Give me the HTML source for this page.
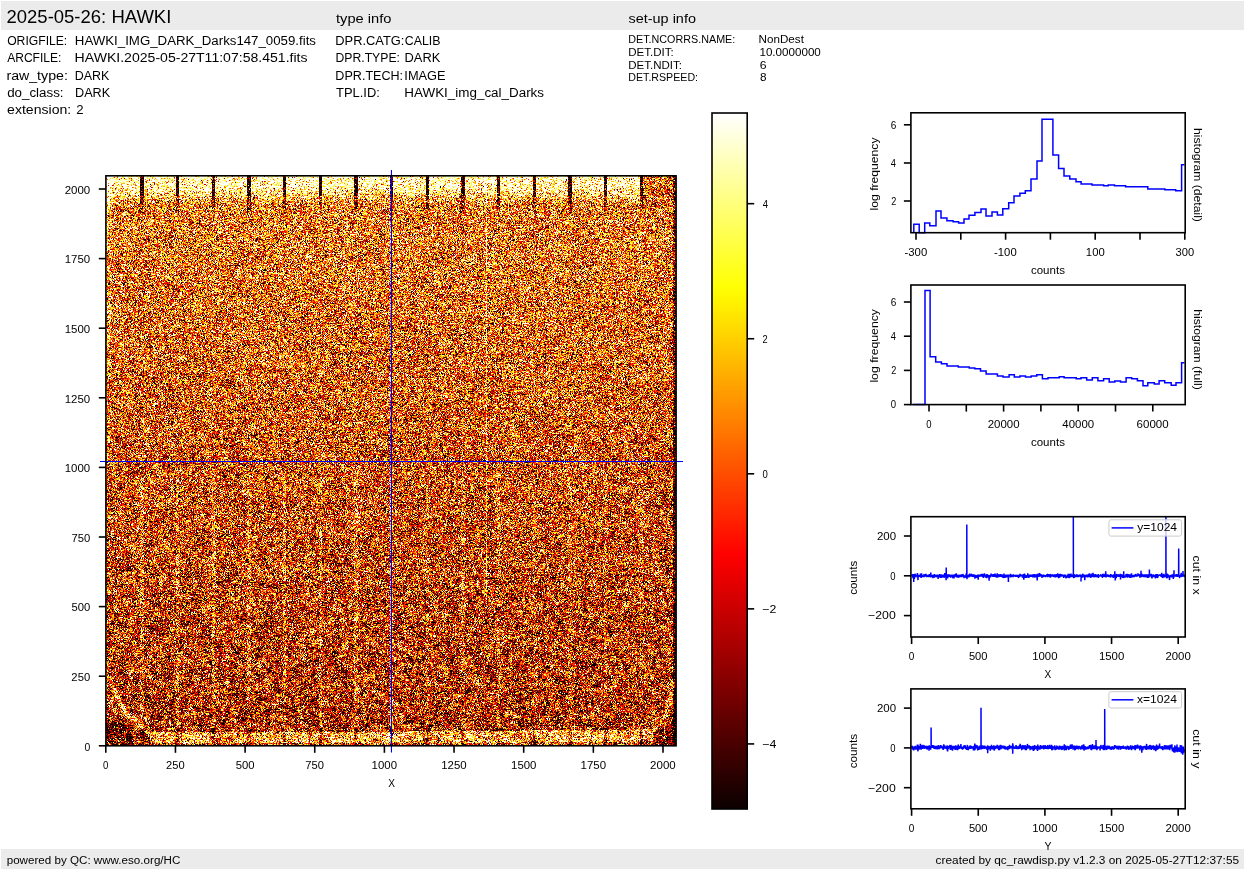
<!DOCTYPE html>
<html><head><meta charset="utf-8">
<style>
html,body{margin:0;padding:0;background:#fff;width:1245px;height:870px;overflow:hidden;}
#img{position:absolute;left:106px;top:176px;width:570px;height:570px;background:linear-gradient(to bottom,rgb(227,178,107) 0%,rgb(218,124,43) 5%,rgb(214,118,39) 16%,rgb(207,106,32) 32%,rgb(201,98,28) 42%,rgb(197,93,26) 53%,rgb(191,86,23) 63%,rgb(183,77,21) 74%,rgb(178,74,20) 84%,rgb(175,69,18) 89%,rgb(183,94,34) 95%);}
svg{position:absolute;left:0;top:0;}
text{font-family:"Liberation Sans",sans-serif;fill:#000;}
</style></head><body>
<canvas id="img" width="570" height="570"></canvas>
<svg width="1245" height="870" viewBox="0 0 1245 870">
<rect x="1" y="1" width="1243" height="29" fill="#ebebeb"/>
<rect x="1" y="849" width="1243" height="20" fill="#ebebeb"/>
<defs><linearGradient id="hot" x1="0" y1="0" x2="0" y2="1"><stop offset="0.0000" stop-color="#ffffff"/><stop offset="0.0167" stop-color="#ffffee"/><stop offset="0.0333" stop-color="#ffffde"/><stop offset="0.0500" stop-color="#ffffcd"/><stop offset="0.0667" stop-color="#ffffbc"/><stop offset="0.0833" stop-color="#ffffab"/><stop offset="0.1000" stop-color="#ffff9b"/><stop offset="0.1167" stop-color="#ffff8a"/><stop offset="0.1333" stop-color="#ffff79"/><stop offset="0.1500" stop-color="#ffff68"/><stop offset="0.1667" stop-color="#ffff58"/><stop offset="0.1833" stop-color="#ffff47"/><stop offset="0.2000" stop-color="#ffff36"/><stop offset="0.2167" stop-color="#ffff25"/><stop offset="0.2333" stop-color="#ffff15"/><stop offset="0.2500" stop-color="#ffff04"/><stop offset="0.2667" stop-color="#fff600"/><stop offset="0.2833" stop-color="#ffeb00"/><stop offset="0.3000" stop-color="#ffe000"/><stop offset="0.3167" stop-color="#ffd500"/><stop offset="0.3333" stop-color="#ffca00"/><stop offset="0.3500" stop-color="#ffbf00"/><stop offset="0.3667" stop-color="#ffb400"/><stop offset="0.3833" stop-color="#ffa800"/><stop offset="0.4000" stop-color="#ff9d00"/><stop offset="0.4167" stop-color="#ff9200"/><stop offset="0.4333" stop-color="#ff8700"/><stop offset="0.4500" stop-color="#ff7c00"/><stop offset="0.4667" stop-color="#ff7100"/><stop offset="0.4833" stop-color="#ff6500"/><stop offset="0.5000" stop-color="#ff5a00"/><stop offset="0.5167" stop-color="#ff4f00"/><stop offset="0.5333" stop-color="#ff4400"/><stop offset="0.5500" stop-color="#ff3900"/><stop offset="0.5667" stop-color="#ff2e00"/><stop offset="0.5833" stop-color="#ff2300"/><stop offset="0.6000" stop-color="#ff1700"/><stop offset="0.6167" stop-color="#ff0c00"/><stop offset="0.6333" stop-color="#ff0100"/><stop offset="0.6500" stop-color="#f50000"/><stop offset="0.6667" stop-color="#ea0000"/><stop offset="0.6833" stop-color="#df0000"/><stop offset="0.7000" stop-color="#d30000"/><stop offset="0.7167" stop-color="#c80000"/><stop offset="0.7333" stop-color="#bd0000"/><stop offset="0.7500" stop-color="#b20000"/><stop offset="0.7667" stop-color="#a70000"/><stop offset="0.7833" stop-color="#9c0000"/><stop offset="0.8000" stop-color="#900000"/><stop offset="0.8167" stop-color="#850000"/><stop offset="0.8333" stop-color="#7a0000"/><stop offset="0.8500" stop-color="#6f0000"/><stop offset="0.8667" stop-color="#640000"/><stop offset="0.8833" stop-color="#590000"/><stop offset="0.9000" stop-color="#4e0000"/><stop offset="0.9167" stop-color="#420000"/><stop offset="0.9333" stop-color="#370000"/><stop offset="0.9500" stop-color="#2c0000"/><stop offset="0.9667" stop-color="#210000"/><stop offset="0.9833" stop-color="#160000"/><stop offset="1.0000" stop-color="#0b0000"/></linearGradient><clipPath id="cx"><rect x="910.9" y="516.7" width="274.3" height="120.3"/></clipPath><clipPath id="cy"><rect x="910.9" y="688.9" width="274.3" height="119.9"/></clipPath></defs>
<rect x="712.0" y="113.0" width="35.2" height="696.0" fill="url(#hot)"/>
<line x1="105.80" y1="745.80" x2="105.80" y2="752.80" stroke="#000" stroke-width="1.6"/>
<line x1="98.80" y1="745.80" x2="105.80" y2="745.80" stroke="#000" stroke-width="1.6"/>
<line x1="175.45" y1="745.80" x2="175.45" y2="752.80" stroke="#000" stroke-width="1.6"/>
<line x1="98.80" y1="676.20" x2="105.80" y2="676.20" stroke="#000" stroke-width="1.6"/>
<line x1="245.10" y1="745.80" x2="245.10" y2="752.80" stroke="#000" stroke-width="1.6"/>
<line x1="98.80" y1="606.60" x2="105.80" y2="606.60" stroke="#000" stroke-width="1.6"/>
<line x1="314.75" y1="745.80" x2="314.75" y2="752.80" stroke="#000" stroke-width="1.6"/>
<line x1="98.80" y1="537.00" x2="105.80" y2="537.00" stroke="#000" stroke-width="1.6"/>
<line x1="384.40" y1="745.80" x2="384.40" y2="752.80" stroke="#000" stroke-width="1.6"/>
<line x1="98.80" y1="467.40" x2="105.80" y2="467.40" stroke="#000" stroke-width="1.6"/>
<line x1="454.05" y1="745.80" x2="454.05" y2="752.80" stroke="#000" stroke-width="1.6"/>
<line x1="98.80" y1="397.80" x2="105.80" y2="397.80" stroke="#000" stroke-width="1.6"/>
<line x1="523.70" y1="745.80" x2="523.70" y2="752.80" stroke="#000" stroke-width="1.6"/>
<line x1="98.80" y1="328.20" x2="105.80" y2="328.20" stroke="#000" stroke-width="1.6"/>
<line x1="593.35" y1="745.80" x2="593.35" y2="752.80" stroke="#000" stroke-width="1.6"/>
<line x1="98.80" y1="258.60" x2="105.80" y2="258.60" stroke="#000" stroke-width="1.6"/>
<line x1="663.00" y1="745.80" x2="663.00" y2="752.80" stroke="#000" stroke-width="1.6"/>
<line x1="98.80" y1="189.00" x2="105.80" y2="189.00" stroke="#000" stroke-width="1.6"/>
<line x1="747.20" y1="203.68" x2="754.20" y2="203.68" stroke="#000" stroke-width="1.6"/>
<line x1="747.20" y1="338.74" x2="754.20" y2="338.74" stroke="#000" stroke-width="1.6"/>
<line x1="747.20" y1="473.80" x2="754.20" y2="473.80" stroke="#000" stroke-width="1.6"/>
<line x1="747.20" y1="608.86" x2="754.20" y2="608.86" stroke="#000" stroke-width="1.6"/>
<line x1="747.20" y1="743.92" x2="754.20" y2="743.92" stroke="#000" stroke-width="1.6"/>
<line x1="916.00" y1="232.70" x2="916.00" y2="239.70" stroke="#000" stroke-width="1.6"/>
<line x1="960.80" y1="232.70" x2="960.80" y2="239.70" stroke="#000" stroke-width="1.6"/>
<line x1="1005.60" y1="232.70" x2="1005.60" y2="239.70" stroke="#000" stroke-width="1.6"/>
<line x1="1050.40" y1="232.70" x2="1050.40" y2="239.70" stroke="#000" stroke-width="1.6"/>
<line x1="1095.20" y1="232.70" x2="1095.20" y2="239.70" stroke="#000" stroke-width="1.6"/>
<line x1="1140.00" y1="232.70" x2="1140.00" y2="239.70" stroke="#000" stroke-width="1.6"/>
<line x1="1184.80" y1="232.70" x2="1184.80" y2="239.70" stroke="#000" stroke-width="1.6"/>
<line x1="903.90" y1="124.80" x2="910.90" y2="124.80" stroke="#000" stroke-width="1.6"/>
<line x1="903.90" y1="163.00" x2="910.90" y2="163.00" stroke="#000" stroke-width="1.6"/>
<line x1="903.90" y1="201.00" x2="910.90" y2="201.00" stroke="#000" stroke-width="1.6"/>
<line x1="929.00" y1="404.60" x2="929.00" y2="411.60" stroke="#000" stroke-width="1.6"/>
<line x1="966.30" y1="404.60" x2="966.30" y2="411.60" stroke="#000" stroke-width="1.6"/>
<line x1="1003.60" y1="404.60" x2="1003.60" y2="411.60" stroke="#000" stroke-width="1.6"/>
<line x1="1040.90" y1="404.60" x2="1040.90" y2="411.60" stroke="#000" stroke-width="1.6"/>
<line x1="1078.20" y1="404.60" x2="1078.20" y2="411.60" stroke="#000" stroke-width="1.6"/>
<line x1="1115.50" y1="404.60" x2="1115.50" y2="411.60" stroke="#000" stroke-width="1.6"/>
<line x1="1152.80" y1="404.60" x2="1152.80" y2="411.60" stroke="#000" stroke-width="1.6"/>
<line x1="903.90" y1="404.60" x2="910.90" y2="404.60" stroke="#000" stroke-width="1.6"/>
<line x1="903.90" y1="370.40" x2="910.90" y2="370.40" stroke="#000" stroke-width="1.6"/>
<line x1="903.90" y1="336.20" x2="910.90" y2="336.20" stroke="#000" stroke-width="1.6"/>
<line x1="903.90" y1="302.00" x2="910.90" y2="302.00" stroke="#000" stroke-width="1.6"/>
<line x1="911.60" y1="637.00" x2="911.60" y2="644.00" stroke="#000" stroke-width="1.6"/>
<line x1="978.25" y1="637.00" x2="978.25" y2="644.00" stroke="#000" stroke-width="1.6"/>
<line x1="1044.90" y1="637.00" x2="1044.90" y2="644.00" stroke="#000" stroke-width="1.6"/>
<line x1="1111.55" y1="637.00" x2="1111.55" y2="644.00" stroke="#000" stroke-width="1.6"/>
<line x1="1178.20" y1="637.00" x2="1178.20" y2="644.00" stroke="#000" stroke-width="1.6"/>
<line x1="903.90" y1="536.00" x2="910.90" y2="536.00" stroke="#000" stroke-width="1.6"/>
<line x1="903.90" y1="575.80" x2="910.90" y2="575.80" stroke="#000" stroke-width="1.6"/>
<line x1="903.90" y1="615.60" x2="910.90" y2="615.60" stroke="#000" stroke-width="1.6"/>
<line x1="911.60" y1="808.80" x2="911.60" y2="815.80" stroke="#000" stroke-width="1.6"/>
<line x1="978.25" y1="808.80" x2="978.25" y2="815.80" stroke="#000" stroke-width="1.6"/>
<line x1="1044.90" y1="808.80" x2="1044.90" y2="815.80" stroke="#000" stroke-width="1.6"/>
<line x1="1111.55" y1="808.80" x2="1111.55" y2="815.80" stroke="#000" stroke-width="1.6"/>
<line x1="1178.20" y1="808.80" x2="1178.20" y2="815.80" stroke="#000" stroke-width="1.6"/>
<line x1="903.90" y1="708.10" x2="910.90" y2="708.10" stroke="#000" stroke-width="1.6"/>
<line x1="903.90" y1="747.90" x2="910.90" y2="747.90" stroke="#000" stroke-width="1.6"/>
<line x1="903.90" y1="787.70" x2="910.90" y2="787.70" stroke="#000" stroke-width="1.6"/>
<path d="M913.80,232.70H913.80V224.20H919.20V232.70H924.70V223.00H929.80V225.80H936.00V211.00H941.00V217.90H946.90V220.70H953.10V221.80H958.60V223.00H964.00V219.10H969.00V215.20H974.90V212.60H981.00V209.00H986.00V216.00H992.00V212.10H997.40V214.90H1002.80V208.70H1008.70V202.80H1014.00V196.10H1019.90V193.20H1025.30V190.70H1031.00V179.10H1037.00V160.90H1042.00V119.20H1052.90V155.00H1058.60V168.60H1064.00V175.90H1069.80V179.00H1076.00V181.80H1081.10V184.10H1092.00V184.90H1103.60V185.70H1108.20V184.90H1114.50V185.70H1125.60V186.70H1147.80V189.10H1164.90V189.80H1175.70V190.80H1181.60V164.70H1184.50" fill="none" stroke="#0000ff" stroke-width="1.5"/>
<path d="M912.90,404.60H925.00V290.60H930.10V356.80H935.70V361.90H941.40V363.80H947.00V365.90H958.30V367.00H969.20V367.90H974.80V368.80H980.50V371.10H986.10V374.00H997.40V376.10H1003.00V376.90H1009.10V374.80H1014.30V376.90H1019.90V375.90H1025.50V376.90H1031.20V375.90H1036.80V374.80H1042.40V378.80H1048.00V377.70H1059.30V376.70H1064.10V377.70H1076.20V378.80H1081.00V377.70H1086.70V380.00H1092.30V377.70H1097.90V380.70H1103.60V378.80H1109.20V382.00H1114.80V380.90H1120.50V382.00H1126.10V377.70H1131.70V378.80H1137.40V380.70H1143.00V385.70H1147.80V382.80H1154.30V384.00H1159.10V380.70H1164.70V382.80H1171.20V385.30H1176.00V382.80H1181.60V362.70H1184.50" fill="none" stroke="#0000ff" stroke-width="1.5"/>
<path clip-path="url(#cx)" d="M911.8,574.6L911.9,576.2L912.1,574.5L912.2,575.7L912.4,574.6L912.5,574.6L912.6,577.3L912.8,576.7L912.9,578.2L913.1,575.5L913.2,575.9L913.3,575.9L913.5,576.1L913.6,576.5L913.8,574.1L913.7,582.0L913.8,575.8L913.9,576.5L914.0,574.4L914.2,575.8L914.3,578.9L914.5,575.8L914.6,575.5L914.7,576.4L914.9,575.9L915.0,574.8L915.2,573.7L915.3,575.3L915.4,574.7L915.6,576.9L915.7,576.3L915.9,577.2L916.0,576.8L916.1,575.9L916.3,575.8L916.4,575.7L916.6,575.5L916.7,575.2L916.8,575.9L917.0,574.8L917.1,575.8L917.3,575.8L917.4,573.0L917.5,574.0L917.7,577.1L917.8,575.8L918.0,580.1L918.1,576.6L918.2,576.4L918.4,576.1L918.5,574.9L918.7,576.8L918.8,576.1L918.9,575.4L919.1,575.5L919.2,576.4L919.4,576.5L919.5,576.9L919.6,575.0L919.8,576.5L919.9,576.7L920.1,576.5L920.2,575.0L920.3,576.4L920.5,573.6L920.6,575.5L920.8,574.4L920.9,576.0L921.0,576.3L921.2,577.9L921.3,575.2L921.5,576.2L921.6,573.3L921.7,575.3L921.9,575.0L922.0,576.1L922.2,577.0L922.3,575.4L922.4,575.3L922.6,576.4L922.7,576.1L922.9,576.0L923.0,576.7L923.1,576.3L923.3,577.2L923.4,575.2L923.6,575.6L923.7,576.1L923.8,577.2L924.0,574.0L924.1,577.2L924.3,575.9L924.4,576.2L924.5,576.0L924.7,575.1L924.8,576.2L925.0,574.8L925.1,576.1L925.2,575.0L925.4,575.7L925.5,576.2L925.7,575.7L925.8,573.8L925.9,576.0L926.1,574.9L926.2,575.1L926.4,576.8L926.5,575.3L926.6,575.8L926.8,577.1L926.9,576.0L927.1,576.4L927.2,575.9L927.3,576.3L927.5,576.1L927.6,575.9L927.8,576.6L927.9,576.5L928.0,574.9L928.2,576.6L928.3,576.5L928.5,574.7L928.6,575.6L928.7,577.1L928.9,575.0L929.0,576.9L929.2,575.3L929.3,576.1L929.4,576.1L929.6,574.1L929.7,576.7L929.9,576.5L930.0,576.4L930.1,576.1L930.3,575.4L930.4,574.2L930.6,576.0L930.7,577.4L930.8,572.6L931.0,575.8L931.1,575.6L931.3,575.2L931.4,575.0L931.5,576.5L931.7,577.0L931.8,575.9L932.0,576.2L932.1,575.0L932.2,577.3L932.4,576.9L932.5,576.3L932.7,576.3L932.8,574.8L932.9,578.2L933.1,575.8L933.2,575.6L933.4,575.3L933.5,576.6L933.6,576.2L933.8,577.7L933.9,574.4L934.1,575.5L934.2,577.8L934.3,575.8L934.5,574.0L934.6,576.5L934.8,575.9L934.9,574.8L935.0,575.3L935.2,575.6L935.3,575.7L935.5,577.2L935.6,575.2L935.7,575.3L935.9,575.6L936.0,576.9L936.2,576.7L936.3,575.8L936.4,576.8L936.6,575.2L936.7,576.3L936.9,576.1L937.0,577.3L937.1,575.0L937.3,574.9L937.4,575.8L937.6,576.8L937.7,575.2L937.8,576.5L938.0,575.9L938.1,579.0L938.3,575.9L938.4,575.5L938.5,575.5L938.7,575.1L938.8,575.8L939.0,574.9L939.1,576.2L939.2,576.1L939.4,576.3L939.5,574.0L939.7,575.5L939.8,576.0L939.9,577.4L940.1,575.5L940.2,576.6L940.4,577.8L940.5,575.8L940.6,575.7L940.8,575.1L940.9,574.3L941.1,576.6L941.2,575.7L941.3,575.6L941.5,577.9L941.6,574.5L941.8,575.9L941.9,574.7L942.0,576.2L942.2,576.0L942.3,574.6L942.5,575.7L942.6,576.3L942.7,577.5L942.9,576.1L943.0,576.0L943.2,575.9L943.3,575.0L943.4,574.6L943.6,576.3L943.7,576.1L943.9,575.3L944.0,575.3L944.1,576.2L944.3,577.8L944.4,576.0L944.6,576.7L944.7,574.8L944.8,573.1L945.0,575.7L945.1,577.1L945.3,575.0L945.4,574.1L945.5,576.9L945.7,576.0L945.8,574.2L946.0,576.6L946.1,580.2L946.2,576.0L946.2,567.5L946.3,575.8L946.4,575.6L946.5,575.6L946.7,576.4L946.8,576.8L946.9,576.3L947.1,576.5L947.2,576.5L947.4,576.3L947.5,576.2L947.6,578.4L947.8,574.4L947.9,574.7L948.1,575.5L948.2,577.2L948.3,575.8L948.5,574.5L948.6,574.9L948.8,576.4L948.9,576.7L949.0,575.5L949.2,575.6L949.3,574.5L949.5,575.6L949.6,575.1L949.7,574.8L949.9,575.8L950.0,576.0L950.2,576.7L950.3,577.1L950.4,575.8L950.6,575.5L950.7,577.6L950.9,576.7L951.0,576.5L951.1,575.7L951.3,575.6L951.4,574.7L951.6,575.4L951.7,575.5L951.8,575.9L952.0,576.1L952.1,574.5L952.3,576.3L952.4,574.9L952.5,575.3L952.7,578.1L952.8,575.8L953.0,577.3L953.1,577.1L953.2,575.3L953.4,576.4L953.5,574.7L953.7,575.1L953.8,575.8L953.9,578.5L954.1,576.1L954.2,575.9L954.4,575.5L954.5,575.5L954.6,577.0L954.8,576.5L954.9,575.0L955.1,576.6L955.2,575.7L955.3,574.0L955.5,576.3L955.6,574.6L955.8,575.1L955.9,576.1L956.0,574.2L956.2,573.4L956.3,575.7L956.5,573.7L956.6,577.4L956.7,576.9L956.9,574.8L957.0,575.4L957.2,575.9L957.3,575.4L957.4,576.5L957.6,576.2L957.7,575.7L957.9,576.3L958.0,575.5L958.1,576.2L958.3,577.8L958.4,574.7L958.6,576.1L958.7,575.0L958.8,577.6L959.0,575.0L959.1,575.2L959.3,576.5L959.4,576.2L959.5,577.0L959.7,576.4L959.8,574.8L960.0,576.4L960.1,575.3L960.2,574.6L960.4,575.5L960.5,575.9L960.7,575.5L960.8,576.1L960.9,576.0L961.1,577.0L961.2,576.5L961.4,575.4L961.5,575.2L961.6,574.2L961.8,575.6L961.9,577.2L962.1,575.5L962.2,575.5L962.3,574.3L962.5,576.4L962.6,574.6L962.8,576.8L962.9,574.1L963.0,574.3L963.2,575.6L963.3,575.3L963.5,576.1L963.6,575.4L963.7,576.2L963.9,575.1L964.0,578.2L964.2,576.8L964.3,576.7L964.4,576.8L964.6,576.2L964.7,576.2L964.9,575.9L965.0,575.9L965.1,577.3L965.3,576.1L965.4,576.5L965.6,575.3L965.7,576.9L965.8,575.7L966.0,577.8L966.1,573.5L966.3,575.1L966.4,578.0L966.5,576.5L966.7,574.7L966.8,575.6L966.8,524.6L966.9,575.8L967.0,579.2L967.1,575.2L967.2,575.8L967.4,576.8L967.5,575.9L967.7,575.3L967.8,576.9L967.9,576.9L968.1,577.0L968.2,576.2L968.4,576.3L968.5,575.5L968.6,574.9L968.8,575.0L968.9,577.2L969.1,576.6L969.2,576.4L969.3,575.9L969.5,576.0L969.6,574.8L969.8,573.5L969.9,575.9L970.0,574.8L970.2,576.5L970.3,576.1L970.5,576.0L970.6,575.1L970.7,574.4L970.9,574.0L971.0,576.4L971.2,575.7L971.3,576.2L971.4,576.6L971.6,574.5L971.7,574.2L971.9,574.2L972.0,575.8L972.1,574.6L972.3,575.5L972.4,576.1L972.6,574.5L972.7,576.1L972.8,576.9L973.0,576.6L973.1,576.1L973.3,576.4L973.4,575.7L973.5,575.4L973.7,574.3L973.8,576.5L974.0,576.3L974.1,575.6L974.2,575.4L974.4,574.8L974.5,575.6L974.7,574.5L974.8,575.9L974.9,578.6L975.1,576.1L975.2,576.6L975.4,576.0L975.5,576.6L975.6,575.6L975.8,575.1L975.9,575.9L976.1,577.1L976.2,576.5L976.3,577.9L976.5,576.9L976.6,575.3L976.8,575.9L976.9,575.3L977.0,575.6L977.2,576.2L977.3,576.6L977.5,575.1L977.6,574.7L977.7,575.3L977.9,576.6L978.0,577.2L978.2,579.6L978.3,577.6L978.4,576.1L978.6,575.3L978.7,576.4L978.9,575.9L979.0,575.4L979.1,575.1L979.3,574.9L979.4,576.7L979.6,576.1L979.7,576.8L979.8,575.3L980.0,575.6L980.1,575.0L980.3,575.4L980.4,575.5L980.5,575.3L980.7,574.8L980.8,576.0L981.0,575.9L981.1,574.2L981.2,576.8L981.4,574.2L981.5,573.9L981.7,575.0L981.8,573.9L981.9,576.7L982.1,575.5L982.2,573.8L982.4,575.8L982.5,575.0L982.6,576.5L982.8,576.5L982.9,577.2L983.1,576.3L983.2,575.5L983.3,576.7L983.5,577.9L983.6,574.5L983.8,574.3L983.9,576.6L984.0,573.9L984.2,575.0L984.3,576.6L984.5,573.2L984.6,576.4L984.7,575.9L984.9,575.3L985.0,575.7L985.2,575.4L985.3,576.8L985.4,576.8L985.6,577.1L985.7,576.4L985.9,577.6L986.0,575.0L986.1,577.5L986.3,574.8L986.4,574.7L986.6,576.0L986.7,578.1L986.8,575.2L987.0,577.4L987.1,574.1L987.3,576.7L987.4,576.0L987.5,574.8L987.7,576.9L987.8,576.8L988.0,575.0L988.1,575.8L988.2,575.3L988.4,575.7L988.5,576.3L988.7,575.4L988.8,575.3L988.9,574.9L989.1,580.7L989.2,576.7L989.4,575.3L989.5,575.6L989.6,576.5L989.8,577.2L989.9,577.0L990.1,577.4L990.2,575.7L990.3,575.8L990.5,577.3L990.6,576.4L990.8,575.6L990.9,575.8L991.0,574.0L991.2,573.8L991.3,574.4L991.5,574.9L991.6,575.2L991.7,574.8L991.9,575.7L992.0,575.1L992.2,575.2L992.3,575.4L992.4,576.8L992.6,576.1L992.7,574.8L992.9,575.0L993.0,575.5L993.1,574.0L993.3,576.4L993.4,577.0L993.6,575.6L993.7,575.6L993.8,576.5L994.0,574.4L994.1,574.4L994.3,575.8L994.4,575.8L994.5,576.9L994.7,575.0L994.8,576.0L995.0,575.1L995.1,573.5L995.2,575.4L995.4,575.5L995.5,575.9L995.7,575.8L995.8,576.8L995.9,576.5L996.1,577.2L996.2,575.5L996.4,575.2L996.5,575.3L996.6,575.4L996.8,576.0L996.9,577.8L997.1,575.1L997.2,573.2L997.3,574.2L997.5,577.5L997.6,574.8L997.8,577.2L997.9,574.1L998.0,576.7L998.2,576.1L998.3,576.2L998.5,574.8L998.6,575.9L998.7,574.7L998.9,576.3L999.0,576.8L999.2,576.5L999.3,576.0L999.4,574.2L999.6,575.6L999.7,575.4L999.9,575.3L1000.0,575.6L1000.1,574.2L1000.3,576.1L1000.4,575.4L1000.6,574.0L1000.7,576.4L1000.8,576.8L1001.0,574.8L1001.1,575.2L1001.3,575.8L1001.4,576.1L1001.5,576.7L1001.7,574.6L1001.8,575.7L1002.0,574.4L1002.1,577.2L1002.2,575.3L1002.4,576.0L1002.5,576.5L1002.7,576.3L1002.8,576.7L1002.9,577.8L1003.1,577.5L1003.2,576.6L1003.4,577.0L1003.5,576.9L1003.6,575.7L1003.8,577.5L1003.9,573.6L1004.1,575.9L1004.2,576.2L1004.3,577.9L1004.5,574.9L1004.6,577.0L1004.8,577.2L1004.9,574.9L1005.0,576.3L1005.2,575.1L1005.3,577.3L1005.5,577.2L1005.6,574.5L1005.7,577.1L1005.9,576.1L1006.0,575.6L1006.2,575.2L1006.3,576.4L1006.4,575.2L1006.6,575.1L1006.7,577.3L1006.9,576.1L1007.0,576.9L1007.1,576.2L1007.3,576.8L1007.4,576.2L1007.6,574.5L1007.7,576.9L1007.8,574.7L1008.0,575.8L1008.1,575.7L1008.3,576.5L1008.4,581.9L1008.5,574.6L1008.7,577.4L1008.8,576.6L1009.0,576.0L1009.1,575.1L1009.2,576.0L1009.4,575.2L1009.5,576.0L1009.7,576.3L1009.8,576.1L1009.9,575.1L1010.1,575.3L1010.2,574.8L1010.4,575.2L1010.5,573.8L1010.6,577.5L1010.8,575.7L1010.9,576.5L1011.1,574.9L1011.2,575.1L1011.3,575.1L1011.5,574.6L1011.6,576.7L1011.8,575.2L1011.9,575.1L1012.0,576.2L1012.2,575.3L1012.3,577.2L1012.5,575.7L1012.6,575.7L1012.7,576.4L1012.9,575.4L1013.0,577.1L1013.2,575.2L1013.3,574.2L1013.4,575.7L1013.6,576.5L1013.7,575.6L1013.9,575.3L1014.0,576.2L1014.1,575.3L1014.3,576.1L1014.4,574.9L1014.6,576.2L1014.7,575.3L1014.8,576.7L1015.0,574.8L1015.1,575.4L1015.3,576.1L1015.4,576.0L1015.5,576.6L1015.7,576.4L1015.8,574.8L1016.0,575.3L1016.1,576.0L1016.2,575.1L1016.4,575.5L1016.5,576.4L1016.7,576.1L1016.8,575.9L1016.9,575.9L1017.1,576.7L1017.2,575.8L1017.4,576.8L1017.5,575.7L1017.6,574.7L1017.8,575.4L1017.9,576.1L1018.1,575.2L1018.2,575.8L1018.3,577.5L1018.5,577.6L1018.6,576.3L1018.8,575.5L1018.9,575.1L1019.0,576.8L1019.2,576.2L1019.3,574.7L1019.5,577.0L1019.6,576.8L1019.7,575.3L1019.9,574.9L1020.0,574.3L1020.2,574.0L1020.3,576.0L1020.4,575.7L1020.6,575.7L1020.7,575.6L1020.9,574.7L1021.0,575.1L1021.1,575.1L1021.3,575.1L1021.4,574.8L1021.6,575.9L1021.7,576.1L1021.8,576.0L1022.0,576.6L1022.1,575.9L1022.3,576.0L1022.4,577.7L1022.5,577.1L1022.7,576.4L1022.8,575.9L1023.0,575.1L1023.1,575.4L1023.2,574.1L1023.4,575.8L1023.5,576.7L1023.7,576.2L1023.8,579.8L1023.9,574.7L1024.1,575.2L1024.2,575.2L1024.4,573.6L1024.5,577.0L1024.6,575.7L1024.8,574.2L1024.9,576.4L1025.1,574.8L1025.2,577.9L1025.3,576.4L1025.5,575.7L1025.6,576.1L1025.8,575.0L1025.9,575.6L1026.0,576.2L1026.2,576.8L1026.3,577.4L1026.5,575.5L1026.6,576.6L1026.7,577.8L1026.9,576.1L1027.0,576.1L1027.2,575.9L1027.3,576.0L1027.4,575.4L1027.6,576.3L1027.7,573.4L1027.9,576.0L1028.0,574.3L1028.1,576.4L1028.3,575.5L1028.4,575.8L1028.6,577.9L1028.7,576.7L1028.8,574.7L1029.0,577.7L1029.1,575.6L1029.3,576.8L1029.4,575.4L1029.5,574.8L1029.7,575.1L1029.8,574.9L1030.0,577.0L1030.1,575.6L1030.2,576.4L1030.4,574.5L1030.5,575.4L1030.7,575.3L1030.8,576.4L1030.9,576.9L1031.1,575.8L1031.2,576.7L1031.4,576.2L1031.5,575.8L1031.6,576.9L1031.8,574.6L1031.9,575.7L1032.1,576.7L1032.2,576.1L1032.3,576.2L1032.5,574.8L1032.6,576.3L1032.8,577.5L1032.9,574.2L1033.0,576.0L1033.2,576.9L1033.3,576.1L1033.5,577.1L1033.6,574.6L1033.7,575.1L1033.9,577.1L1034.0,575.9L1034.2,574.2L1034.3,574.7L1034.4,577.4L1034.6,577.0L1034.7,575.2L1034.9,574.9L1035.0,576.0L1035.1,575.8L1035.3,577.5L1035.4,575.7L1035.6,576.0L1035.7,576.1L1035.8,574.4L1036.0,576.0L1036.1,577.5L1036.3,576.0L1036.4,575.4L1036.5,575.7L1036.7,574.9L1036.8,574.4L1037.0,574.8L1037.1,575.2L1037.2,580.5L1037.4,576.8L1037.5,573.9L1037.7,576.1L1037.8,575.2L1037.9,576.5L1038.1,576.6L1038.2,576.4L1038.4,575.9L1038.5,575.4L1038.6,576.4L1038.8,576.1L1038.9,575.5L1039.1,576.6L1039.2,573.0L1039.3,576.4L1039.5,576.2L1039.6,576.1L1039.8,575.3L1039.9,575.8L1040.0,574.0L1040.2,574.1L1040.3,576.1L1040.5,575.2L1040.6,575.7L1040.7,574.9L1040.9,574.9L1041.0,576.4L1041.2,575.9L1041.3,574.2L1041.4,576.1L1041.6,576.9L1041.7,576.3L1041.9,575.4L1042.0,577.5L1042.1,577.8L1042.3,575.3L1042.4,575.3L1042.6,577.3L1042.7,576.7L1042.8,575.6L1043.0,576.2L1043.1,576.3L1043.3,576.6L1043.4,575.1L1043.5,574.5L1043.7,576.9L1043.8,575.5L1044.0,574.9L1044.1,576.7L1044.2,575.4L1044.4,576.4L1044.5,576.1L1044.7,575.2L1044.8,576.0L1044.9,576.2L1045.1,576.2L1045.2,575.3L1045.4,577.1L1045.5,575.3L1045.6,575.4L1045.8,575.6L1045.9,575.8L1046.1,576.0L1046.2,575.6L1046.3,576.6L1046.5,575.5L1046.6,576.0L1046.8,575.5L1046.9,574.5L1047.0,574.1L1047.2,575.3L1047.3,574.3L1047.5,574.3L1047.6,577.1L1047.7,576.5L1047.9,575.0L1048.0,574.3L1048.2,575.5L1048.3,574.0L1048.4,576.5L1048.6,574.5L1048.7,575.3L1048.9,574.5L1049.0,576.5L1049.1,576.3L1049.3,576.2L1049.4,576.4L1049.6,576.4L1049.7,575.5L1049.8,574.2L1050.0,576.5L1050.1,574.0L1050.3,575.2L1050.4,577.6L1050.5,576.0L1050.7,576.3L1050.8,574.4L1051.0,574.2L1051.1,576.2L1051.2,575.5L1051.4,576.1L1051.5,575.2L1051.7,576.6L1051.8,576.0L1051.9,575.1L1052.1,576.1L1052.2,575.6L1052.4,574.9L1052.5,575.6L1052.6,574.8L1052.8,574.8L1052.9,576.7L1053.1,575.8L1053.2,574.8L1053.3,575.9L1053.5,575.6L1053.6,576.5L1053.8,576.8L1053.9,574.6L1054.0,576.0L1054.2,576.3L1054.3,575.6L1054.5,576.2L1054.6,574.4L1054.7,574.7L1054.9,575.4L1055.0,576.3L1055.2,575.5L1055.3,577.0L1055.4,577.5L1055.6,576.1L1055.7,574.4L1055.9,576.9L1056.0,577.2L1056.1,576.7L1056.3,575.4L1056.4,574.6L1056.6,574.3L1056.7,576.5L1056.8,574.4L1057.0,576.0L1057.1,575.3L1057.3,575.2L1057.4,576.9L1057.5,576.3L1057.7,573.4L1057.8,575.0L1058.0,575.5L1058.1,576.2L1058.2,576.4L1058.4,576.6L1058.5,578.3L1058.7,575.4L1058.8,574.5L1058.9,576.4L1059.1,574.2L1059.2,574.4L1059.4,576.2L1059.5,576.3L1059.6,577.7L1059.8,575.1L1059.9,575.8L1060.1,576.5L1060.2,573.9L1060.3,575.3L1060.5,576.2L1060.6,574.5L1060.8,574.0L1060.9,574.9L1061.0,575.9L1061.2,575.2L1061.3,575.6L1061.5,576.6L1061.6,576.2L1061.7,576.3L1061.9,575.9L1062.0,574.4L1062.2,576.4L1062.3,575.6L1062.4,575.4L1062.6,576.3L1062.7,575.8L1062.9,576.1L1063.0,574.9L1063.1,575.7L1063.3,575.3L1063.4,576.1L1063.6,576.2L1063.7,577.9L1063.8,574.8L1064.0,575.0L1064.1,576.6L1064.3,575.9L1064.4,575.8L1064.5,575.2L1064.7,577.0L1064.8,576.6L1065.0,577.0L1065.1,576.1L1065.2,576.1L1065.4,576.0L1065.5,574.6L1065.7,576.5L1065.8,576.4L1065.9,577.8L1066.1,578.1L1066.2,576.9L1066.4,578.1L1066.5,576.3L1066.6,576.3L1066.8,576.0L1066.9,575.6L1067.1,576.3L1067.2,575.7L1067.3,576.1L1067.5,576.0L1067.6,577.6L1067.8,574.8L1067.9,576.9L1068.0,577.7L1068.2,573.8L1068.3,576.4L1068.5,576.4L1068.6,574.1L1068.7,575.6L1068.9,575.8L1069.0,576.2L1069.2,578.1L1069.3,574.6L1069.4,576.8L1069.6,578.1L1069.7,573.8L1069.9,576.0L1070.0,576.9L1070.1,575.8L1070.3,574.4L1070.4,576.1L1070.6,575.1L1070.7,575.6L1070.8,576.9L1071.0,573.6L1071.1,577.1L1071.3,575.5L1071.4,575.5L1071.5,576.3L1071.7,576.5L1071.8,574.8L1072.0,575.8L1072.1,575.2L1072.2,575.0L1072.4,575.1L1072.5,576.8L1072.7,575.5L1072.8,576.9L1072.9,574.9L1073.1,577.2L1073.2,575.0L1073.4,574.9L1073.3,510.0L1073.4,575.8L1073.5,575.5L1073.6,578.1L1073.8,574.8L1073.9,576.8L1074.1,578.1L1074.2,574.0L1074.3,575.8L1074.5,575.2L1074.6,577.0L1074.8,577.0L1074.9,576.0L1075.0,577.0L1075.2,576.2L1075.3,576.3L1075.5,577.1L1075.6,576.1L1075.7,575.9L1075.9,575.2L1076.0,577.1L1076.2,574.9L1076.3,574.6L1076.4,575.6L1076.6,575.4L1076.7,575.7L1076.9,576.6L1077.0,574.3L1077.1,576.0L1077.3,577.1L1077.4,575.4L1077.6,575.4L1077.7,574.9L1077.8,576.4L1078.0,575.7L1078.1,575.2L1078.3,576.3L1078.4,575.7L1078.5,577.3L1078.7,575.3L1078.8,574.9L1079.0,575.8L1079.1,575.7L1079.2,576.4L1079.4,575.5L1079.5,576.6L1079.7,575.1L1079.8,575.5L1079.9,575.5L1080.1,574.4L1080.2,576.1L1080.4,575.9L1080.5,575.4L1080.6,577.0L1080.8,576.0L1080.9,575.5L1081.1,575.9L1081.0,581.5L1081.1,575.8L1081.2,576.2L1081.3,575.8L1081.5,577.3L1081.6,576.3L1081.8,576.6L1081.9,575.4L1082.0,574.5L1082.2,577.8L1082.3,576.5L1082.5,574.9L1082.6,576.3L1082.7,573.7L1082.9,574.8L1083.0,575.9L1083.2,576.8L1083.3,575.3L1083.4,575.7L1083.6,575.9L1083.7,577.1L1083.9,575.7L1084.0,576.1L1084.1,574.6L1084.3,575.9L1084.4,575.5L1084.6,578.1L1084.7,575.4L1084.8,580.2L1085.0,575.1L1085.1,576.5L1085.3,576.5L1085.4,574.7L1085.5,576.6L1085.7,577.2L1085.8,576.2L1086.0,575.6L1086.1,575.8L1086.2,575.4L1086.4,575.9L1086.5,574.5L1086.7,575.9L1086.8,576.4L1086.9,576.4L1087.1,574.8L1087.2,575.7L1087.4,575.7L1087.5,577.5L1087.6,575.1L1087.8,576.6L1087.9,575.1L1088.1,575.1L1088.2,574.8L1088.3,576.1L1088.5,574.4L1088.6,577.2L1088.8,574.6L1088.9,576.6L1089.0,575.4L1089.2,573.5L1089.3,574.5L1089.5,576.3L1089.6,573.2L1089.7,575.2L1089.9,576.8L1090.0,575.9L1090.2,575.3L1090.3,575.4L1090.4,576.5L1090.6,577.8L1090.7,576.6L1090.9,574.2L1091.0,575.4L1091.1,574.2L1091.3,575.8L1091.4,577.3L1091.6,576.3L1091.7,575.8L1091.8,575.5L1092.0,573.5L1092.1,574.7L1092.3,575.6L1092.4,576.9L1092.5,574.9L1092.7,575.3L1092.8,576.1L1093.0,572.9L1093.1,575.3L1093.2,574.8L1093.4,577.1L1093.5,575.3L1093.7,574.4L1093.8,575.7L1093.9,576.7L1094.1,574.8L1094.2,576.8L1094.4,577.3L1094.5,574.2L1094.6,576.1L1094.8,576.1L1094.9,575.7L1095.1,576.9L1095.2,576.6L1095.3,574.1L1095.5,575.5L1095.6,575.0L1095.8,575.0L1095.9,575.9L1096.0,574.6L1096.2,575.2L1096.3,576.0L1096.5,577.1L1096.6,575.2L1096.7,576.7L1096.9,577.0L1097.0,575.1L1097.2,575.6L1097.3,575.2L1097.4,575.9L1097.6,576.7L1097.7,577.2L1097.9,576.2L1098.0,574.6L1098.1,575.5L1098.3,574.1L1098.4,578.0L1098.6,576.2L1098.7,576.0L1098.8,576.1L1099.0,576.5L1099.1,575.3L1099.3,576.8L1099.4,575.2L1099.5,576.5L1099.7,575.8L1099.8,576.0L1100.0,575.7L1100.1,576.3L1100.2,575.0L1100.4,575.7L1100.5,574.8L1100.7,574.8L1100.8,575.0L1100.9,576.3L1101.1,574.6L1101.2,575.6L1101.4,575.8L1101.5,576.0L1101.6,576.2L1101.8,574.5L1101.9,577.0L1102.1,574.5L1102.2,575.8L1102.3,574.8L1102.5,577.9L1102.6,573.8L1102.8,576.4L1102.9,576.1L1103.0,575.0L1103.2,575.7L1103.3,576.2L1103.5,575.8L1103.6,576.4L1103.7,576.6L1103.9,573.7L1104.0,574.9L1104.2,574.7L1104.3,575.1L1104.4,577.0L1104.6,575.0L1104.7,575.0L1104.9,575.6L1105.0,576.5L1105.1,575.9L1105.3,577.2L1105.4,576.5L1105.6,575.4L1105.7,575.6L1105.7,571.3L1105.8,575.8L1105.8,576.4L1106.0,574.4L1106.1,577.5L1106.3,576.2L1106.4,576.4L1106.5,575.9L1106.7,575.5L1106.8,576.5L1107.0,574.9L1107.1,574.8L1107.2,574.9L1107.4,575.4L1107.5,575.7L1107.7,575.2L1107.8,575.8L1107.9,576.6L1108.1,576.4L1108.2,576.0L1108.4,576.6L1108.5,574.6L1108.6,575.2L1108.8,575.1L1108.9,576.8L1109.1,576.2L1109.2,576.0L1109.3,575.9L1109.5,575.5L1109.6,576.3L1109.8,576.3L1109.9,576.8L1110.0,575.2L1110.2,575.5L1110.3,577.5L1110.5,576.7L1110.6,574.0L1110.7,576.2L1110.9,575.9L1111.0,574.3L1111.2,576.1L1111.3,576.3L1111.4,576.5L1111.6,575.2L1111.7,576.5L1111.9,574.7L1112.0,576.4L1112.1,576.3L1112.3,576.2L1112.4,577.1L1112.6,574.9L1112.7,575.6L1112.8,574.9L1113.0,575.8L1113.1,575.3L1113.3,578.0L1113.4,575.5L1113.5,577.2L1113.7,577.4L1113.8,574.3L1114.0,575.7L1114.1,576.6L1114.2,577.1L1114.4,576.7L1114.5,576.4L1114.7,575.1L1114.8,576.5L1114.8,571.3L1114.9,575.8L1114.9,576.5L1115.1,575.2L1115.2,574.7L1115.2,580.6L1115.3,575.8L1115.4,575.7L1115.5,576.5L1115.6,575.1L1115.8,575.5L1115.9,576.0L1116.1,574.4L1116.2,576.4L1116.3,578.1L1116.5,574.9L1116.6,574.2L1116.8,574.5L1116.9,575.7L1117.0,574.9L1117.2,576.7L1117.3,575.3L1117.5,574.6L1117.6,575.6L1117.7,575.8L1117.9,576.0L1118.0,575.2L1118.2,575.4L1118.3,575.1L1118.4,575.5L1118.6,574.2L1118.7,577.0L1118.9,575.1L1119.0,574.6L1119.1,575.0L1119.3,575.2L1119.4,575.6L1119.6,575.2L1119.7,575.1L1119.8,575.5L1120.0,575.1L1120.1,577.0L1120.3,573.9L1120.4,575.4L1120.5,575.9L1120.5,579.6L1120.6,575.8L1120.7,576.3L1120.8,576.5L1121.0,577.2L1121.1,574.2L1121.2,575.1L1121.4,576.5L1121.5,576.9L1121.7,576.2L1121.8,575.6L1121.9,576.8L1122.1,576.5L1122.2,574.9L1122.4,575.7L1122.5,577.0L1122.6,577.8L1122.8,577.2L1122.9,575.0L1123.1,575.2L1123.2,574.9L1123.3,573.8L1123.5,576.2L1123.6,576.0L1123.8,578.1L1123.7,571.3L1123.8,575.8L1123.9,575.2L1124.0,576.4L1124.2,576.2L1124.3,575.5L1124.5,576.7L1124.6,576.4L1124.7,575.8L1124.9,577.3L1125.0,577.1L1125.2,576.3L1125.3,576.5L1125.4,575.7L1125.6,576.1L1125.7,576.9L1125.9,576.3L1126.0,574.1L1126.1,577.0L1126.3,576.3L1126.4,575.5L1126.6,574.4L1126.7,576.6L1126.8,576.4L1127.0,576.7L1127.1,573.9L1127.3,576.9L1127.4,575.9L1127.5,577.6L1127.7,575.7L1127.8,576.4L1128.0,575.2L1128.1,575.4L1128.2,577.3L1128.4,574.2L1128.5,575.1L1128.7,575.8L1128.8,576.4L1128.9,574.9L1129.1,576.0L1129.2,577.1L1129.4,574.7L1129.5,575.8L1129.6,576.2L1129.8,574.2L1129.9,577.9L1130.1,575.5L1130.2,575.8L1130.3,576.9L1130.5,575.6L1130.6,575.3L1130.8,576.7L1130.9,576.1L1131.0,576.8L1131.2,577.7L1131.3,575.0L1131.5,573.3L1131.6,574.2L1131.7,575.4L1131.9,577.1L1132.0,576.4L1132.2,577.4L1132.3,575.1L1132.4,576.1L1132.6,577.0L1132.7,576.8L1132.9,575.9L1133.0,575.1L1133.1,575.6L1133.3,575.3L1133.4,576.8L1133.6,576.7L1133.7,576.8L1133.8,576.4L1134.0,576.4L1134.1,575.2L1134.3,574.9L1134.4,575.5L1134.5,576.6L1134.7,576.7L1134.8,576.3L1135.0,575.6L1135.1,576.2L1135.2,576.3L1135.4,574.3L1135.5,576.5L1135.7,574.3L1135.8,575.7L1135.9,573.9L1136.1,576.2L1136.2,576.1L1136.4,574.9L1136.5,574.9L1136.6,574.8L1136.8,576.3L1136.9,576.0L1137.1,576.7L1137.2,575.8L1137.3,575.2L1137.5,575.6L1137.6,575.9L1137.8,574.6L1137.9,575.4L1138.0,573.4L1138.2,576.0L1138.3,575.0L1138.5,575.0L1138.6,575.2L1138.7,574.0L1138.9,575.2L1139.0,575.1L1139.2,575.9L1139.3,575.9L1139.4,576.5L1139.6,576.2L1139.7,574.4L1139.9,577.8L1140.0,576.1L1140.1,574.7L1140.3,577.2L1140.4,575.5L1140.6,573.8L1140.7,575.0L1140.8,575.5L1141.0,575.2L1141.0,570.7L1141.1,575.8L1141.1,575.9L1141.3,576.3L1141.4,575.3L1141.5,574.6L1141.7,575.2L1141.8,576.7L1142.0,576.7L1142.1,573.7L1142.2,575.4L1142.4,575.9L1142.5,575.4L1142.7,575.8L1142.8,576.1L1142.9,575.7L1143.1,575.4L1143.2,575.7L1143.4,576.4L1143.5,575.5L1143.6,576.9L1143.8,576.4L1143.9,574.3L1144.1,576.7L1144.2,577.3L1144.3,574.9L1144.5,576.4L1144.6,575.0L1144.8,575.0L1144.9,575.2L1145.0,575.5L1145.2,576.5L1145.3,574.9L1145.5,575.6L1145.6,574.3L1145.7,575.0L1145.9,577.4L1146.0,575.9L1146.2,576.2L1146.3,574.6L1146.4,577.0L1146.6,575.9L1146.7,574.3L1146.9,576.8L1147.0,575.2L1147.1,576.3L1147.3,575.3L1147.4,574.2L1147.6,577.8L1147.7,575.3L1147.8,577.9L1148.0,575.6L1148.1,574.6L1148.3,575.5L1148.4,575.9L1148.5,575.9L1148.7,575.5L1148.8,577.8L1149.0,574.6L1149.1,574.5L1149.2,576.5L1149.4,575.2L1149.4,569.4L1149.5,575.8L1149.5,576.7L1149.7,575.6L1149.8,574.5L1149.9,575.0L1150.1,575.8L1150.2,576.4L1150.4,574.1L1150.5,576.2L1150.6,575.2L1150.8,575.8L1150.9,575.3L1151.1,575.7L1151.2,575.6L1151.3,573.9L1151.5,576.5L1151.6,577.8L1151.8,575.4L1151.9,575.1L1152.0,578.4L1152.2,574.6L1152.3,575.6L1152.5,575.4L1152.6,576.6L1152.7,574.9L1152.9,576.8L1153.0,575.1L1153.2,577.2L1153.3,574.9L1153.4,575.3L1153.6,574.3L1153.7,576.4L1153.9,575.6L1154.0,577.2L1154.1,576.1L1154.3,575.1L1154.4,577.0L1154.6,575.8L1154.7,575.5L1154.8,575.8L1155.0,575.5L1155.1,576.2L1155.3,575.3L1155.4,578.4L1155.5,576.8L1155.7,575.6L1155.8,574.9L1156.0,574.1L1156.1,576.4L1156.2,577.9L1156.4,575.6L1156.5,577.5L1156.7,575.5L1156.8,576.3L1156.9,574.5L1157.1,575.6L1157.2,576.4L1157.4,574.1L1157.5,578.1L1157.6,576.8L1157.8,576.1L1157.9,577.4L1158.1,575.0L1158.2,574.8L1158.3,575.0L1158.5,575.6L1158.6,576.1L1158.8,574.7L1158.9,575.9L1159.0,575.3L1159.2,575.4L1159.3,575.5L1159.5,574.6L1159.6,575.1L1159.7,575.4L1159.9,574.4L1160.0,575.1L1160.2,574.9L1160.3,575.7L1160.4,575.3L1160.6,574.7L1160.7,574.8L1160.9,575.7L1161.0,576.6L1161.1,574.8L1161.3,574.1L1161.4,576.9L1161.6,576.8L1161.7,572.8L1161.8,575.2L1162.0,576.4L1162.1,576.4L1162.3,574.8L1162.4,576.6L1162.5,576.4L1162.7,574.9L1162.8,578.1L1163.0,576.5L1163.1,574.4L1163.2,576.3L1163.4,576.7L1163.5,577.0L1163.7,575.6L1163.8,575.4L1163.9,573.8L1164.1,576.2L1164.2,574.8L1164.4,576.0L1164.5,577.3L1164.6,577.0L1164.8,577.1L1164.9,576.5L1165.1,574.9L1165.2,575.7L1165.3,575.7L1165.5,575.5L1165.6,576.3L1165.8,576.1L1165.9,575.4L1165.9,510.0L1166.0,575.8L1166.0,576.7L1166.2,574.7L1166.3,575.3L1166.5,576.2L1166.6,578.3L1166.7,577.4L1166.9,573.8L1167.0,576.2L1167.2,573.4L1167.3,577.8L1167.4,577.6L1167.6,576.0L1167.7,574.8L1167.9,576.4L1168.0,576.2L1168.1,576.7L1168.3,575.0L1168.4,575.0L1168.6,575.0L1168.7,577.5L1168.8,575.5L1169.0,576.9L1169.1,576.0L1169.3,576.9L1169.4,575.9L1169.5,580.1L1169.7,576.0L1169.8,575.6L1170.0,576.2L1170.1,575.3L1170.2,576.1L1170.4,576.1L1170.5,576.7L1170.7,576.7L1170.8,574.9L1170.9,575.5L1171.1,576.5L1171.2,576.7L1171.4,576.2L1171.5,575.3L1171.6,574.8L1171.8,577.4L1171.9,575.1L1172.1,575.0L1172.2,575.8L1172.3,576.1L1172.5,576.5L1172.6,575.8L1172.8,576.8L1172.9,574.3L1173.0,576.6L1173.2,575.9L1173.3,579.0L1173.5,573.7L1173.6,574.9L1173.7,576.1L1173.9,576.9L1174.0,577.5L1174.0,570.2L1174.1,575.8L1174.2,576.2L1174.3,576.8L1174.4,575.5L1174.6,576.4L1174.7,575.3L1174.9,576.0L1175.0,576.6L1175.1,575.6L1175.3,576.4L1175.4,575.3L1175.6,576.7L1175.7,575.0L1175.8,574.9L1176.0,575.6L1176.1,575.2L1176.3,575.9L1176.4,574.1L1176.5,575.7L1176.7,574.5L1176.8,574.6L1177.0,576.5L1177.1,576.7L1177.2,576.1L1177.4,576.0L1177.5,575.1L1177.7,574.2L1177.8,577.0L1177.9,575.4L1178.1,575.6L1178.2,576.1L1178.4,576.3L1178.5,576.0L1178.6,576.4L1178.7,548.5L1178.8,575.8L1178.8,574.9L1178.9,575.4L1179.1,576.0L1179.2,575.3L1179.3,575.1L1179.5,576.6L1179.6,578.3L1179.8,575.1L1179.9,575.5L1180.0,576.0L1180.2,575.2L1180.3,575.6L1180.5,575.7L1180.6,575.6L1180.7,574.2L1180.9,576.4L1181.0,576.1L1181.2,575.2L1181.3,572.7L1181.4,577.0L1181.6,575.3L1181.7,574.9L1181.9,576.6L1182.0,576.8L1182.1,574.7L1182.3,575.1L1182.4,576.6L1182.6,574.5L1182.7,575.7L1182.8,574.7L1183.0,575.4L1183.0,571.0L1183.1,575.8L1183.1,574.0L1183.3,576.5L1183.4,574.8L1183.5,575.3L1183.7,575.9L1183.8,575.4L1184.0,576.0L1184.1,576.4L1184.2,576.4L1184.4,577.0L1184.5,574.5" fill="none" stroke="#0000ff" stroke-width="1.5" stroke-linejoin="bevel"/>
<path clip-path="url(#cy)" d="M911.8,745.7L911.9,747.8L912.1,748.7L912.2,747.6L912.4,746.9L912.5,745.9L912.6,748.3L912.8,748.6L912.9,749.7L913.1,748.3L913.2,746.8L913.3,748.6L913.5,750.1L913.6,748.5L913.8,750.5L913.9,747.3L914.0,748.2L914.2,748.3L914.3,747.4L914.5,747.1L914.6,746.4L914.7,748.3L914.9,747.3L915.0,747.7L915.2,749.3L915.3,747.2L915.4,746.8L915.6,745.8L915.7,746.5L915.9,748.6L916.0,749.8L916.1,747.9L916.3,747.7L916.4,748.8L916.6,748.8L916.7,748.4L916.8,748.5L917.0,747.7L917.1,748.8L917.3,747.9L917.4,744.4L917.5,748.0L917.7,748.9L917.8,750.0L918.0,751.3L918.1,744.7L918.2,748.5L918.4,749.5L918.5,748.4L918.7,748.3L918.8,749.8L918.9,746.4L919.1,749.1L919.2,749.0L919.4,746.3L919.5,749.0L919.6,745.9L919.8,748.0L919.9,748.7L920.1,746.1L920.2,747.3L920.3,743.7L920.5,748.5L920.6,746.6L920.8,749.1L920.9,747.3L921.0,749.6L921.2,747.0L921.3,749.3L921.5,746.2L921.6,746.1L921.7,749.0L921.9,746.8L922.0,744.9L922.2,748.8L922.3,746.7L922.4,748.5L922.6,748.2L922.7,746.9L922.9,746.1L923.0,745.6L923.1,747.1L923.3,746.6L923.4,748.1L923.6,748.4L923.7,748.1L923.8,745.9L924.0,745.0L924.1,746.2L924.3,747.6L924.4,747.0L924.5,748.3L924.7,748.7L924.8,747.6L925.0,746.7L925.1,747.9L925.2,747.3L925.4,746.8L925.5,748.0L925.7,746.7L925.8,747.9L925.9,746.7L926.1,746.0L926.2,748.6L926.4,745.7L926.5,746.9L926.6,746.9L926.8,748.8L926.9,748.1L927.1,748.2L927.2,749.7L927.3,748.1L927.5,746.5L927.6,746.8L927.8,747.2L927.9,748.1L928.0,745.8L928.2,746.1L928.3,747.4L928.5,748.8L928.6,745.7L928.7,748.8L928.9,747.4L929.0,750.8L929.2,748.8L929.3,745.3L929.4,747.4L929.6,746.4L929.7,747.9L929.9,746.8L930.0,747.4L930.1,747.7L930.3,747.3L930.4,746.5L930.6,746.6L930.7,749.8L930.8,746.9L931.0,746.1L931.1,746.2L931.1,727.5L931.2,747.5L931.3,745.7L931.4,745.8L931.5,747.9L931.7,745.5L931.8,747.3L932.0,745.0L932.1,747.6L932.2,747.0L932.4,746.3L932.5,747.6L932.7,745.1L932.8,747.9L932.9,745.8L933.1,746.9L933.2,746.0L933.4,746.1L933.5,745.5L933.6,745.6L933.8,746.3L933.9,746.6L934.1,749.0L934.2,746.1L934.3,748.7L934.5,748.1L934.6,745.7L934.8,748.5L934.9,748.5L935.0,747.7L935.2,748.1L935.3,746.6L935.5,748.1L935.6,749.2L935.7,746.0L935.9,746.4L936.0,746.2L936.2,747.3L936.3,749.1L936.4,746.6L936.6,747.9L936.7,748.7L936.9,748.6L937.0,748.5L937.1,748.9L937.3,745.6L937.4,749.4L937.6,747.1L937.7,747.2L937.8,749.1L938.0,746.9L938.1,748.2L938.3,748.4L938.4,748.6L938.5,747.8L938.7,745.0L938.8,747.1L939.0,748.4L939.1,748.1L939.2,749.2L939.4,748.3L939.5,748.1L939.7,748.1L939.8,747.3L939.9,748.1L940.1,746.7L940.2,748.1L940.4,745.7L940.5,746.3L940.6,747.0L940.8,745.1L940.9,747.8L941.1,747.9L941.2,747.0L941.3,746.6L941.5,745.9L941.6,747.3L941.8,747.8L941.9,746.9L942.0,747.5L942.2,748.4L942.3,746.4L942.5,747.4L942.6,748.1L942.7,746.5L942.9,749.7L943.0,746.9L943.2,748.1L943.3,749.8L943.4,749.0L943.6,747.8L943.7,744.3L943.9,747.1L944.0,748.5L944.1,747.9L944.3,747.8L944.4,747.1L944.6,745.4L944.7,748.1L944.8,747.4L945.0,747.6L945.1,748.2L945.3,748.4L945.4,747.3L945.5,748.6L945.7,746.3L945.8,747.4L946.0,748.5L946.1,747.8L946.2,746.5L946.4,749.0L946.5,747.7L946.7,747.1L946.8,746.7L946.9,747.5L947.1,745.3L947.2,750.4L947.4,748.4L947.5,748.6L947.6,751.5L947.8,748.3L947.9,747.6L948.1,747.7L948.2,748.7L948.3,748.3L948.5,746.1L948.6,746.9L948.8,748.4L948.9,746.9L949.0,747.9L949.2,747.3L949.3,746.5L949.5,745.8L949.6,747.9L949.7,747.4L949.9,748.3L950.0,745.8L950.2,745.0L950.3,748.6L950.4,750.0L950.6,746.8L950.7,747.8L950.9,748.3L951.0,744.9L951.1,747.8L951.3,746.9L951.4,746.3L951.6,749.9L951.7,747.3L951.8,748.2L952.0,748.7L952.1,747.9L952.3,748.7L952.4,745.8L952.5,750.8L952.7,746.4L952.8,748.0L953.0,749.1L953.1,746.6L953.2,746.8L953.4,747.3L953.5,747.9L953.7,748.3L953.8,748.1L953.9,747.0L954.1,746.0L954.2,746.3L954.4,748.9L954.5,747.3L954.6,747.3L954.8,749.1L954.9,747.5L955.1,748.0L955.2,749.9L955.3,746.7L955.5,749.8L955.6,748.1L955.8,745.2L955.9,748.5L956.0,747.6L956.2,747.4L956.3,747.2L956.5,748.3L956.6,748.3L956.7,746.2L956.9,746.9L957.0,749.6L957.2,745.9L957.3,750.2L957.4,747.2L957.6,750.1L957.7,748.8L957.9,748.7L958.0,747.4L958.1,744.9L958.3,745.0L958.4,749.2L958.6,748.3L958.7,748.1L958.8,747.4L959.0,746.8L959.1,748.2L959.3,748.6L959.4,748.9L959.5,745.7L959.7,747.1L959.8,747.8L960.0,746.9L960.1,747.0L960.2,746.0L960.4,748.0L960.5,748.3L960.7,747.5L960.8,747.6L960.9,744.1L961.1,747.1L961.2,747.8L961.4,747.1L961.5,748.4L961.6,748.6L961.8,747.6L961.9,746.8L962.1,747.9L962.2,747.4L962.3,747.4L962.5,749.6L962.6,748.2L962.8,748.7L962.9,747.7L963.0,748.1L963.2,748.7L963.3,748.9L963.5,746.7L963.6,746.1L963.7,746.1L963.9,747.4L964.0,746.4L964.2,747.9L964.3,747.6L964.4,747.4L964.6,747.7L964.7,745.8L964.9,745.7L965.0,745.1L965.1,747.7L965.3,745.7L965.4,747.8L965.6,746.9L965.7,748.9L965.8,747.6L966.0,748.9L966.1,748.9L966.3,747.6L966.4,749.7L966.5,747.1L966.7,747.7L966.8,746.7L967.0,748.9L967.1,747.7L967.2,750.0L967.4,744.9L967.5,748.9L967.7,749.9L967.8,746.5L967.9,747.2L968.1,748.8L968.2,750.2L968.4,747.5L968.5,749.2L968.6,747.3L968.8,748.6L968.9,749.1L969.1,748.2L969.2,746.9L969.3,747.4L969.5,747.6L969.6,746.0L969.8,748.2L969.9,746.4L970.0,745.7L970.2,745.9L970.3,747.0L970.5,748.2L970.6,748.9L970.7,746.8L970.9,746.6L971.0,748.2L971.2,747.2L971.3,745.8L971.4,747.8L971.6,748.2L971.7,747.6L971.9,746.8L972.0,746.5L972.1,748.6L972.3,746.5L972.4,746.7L972.6,748.0L972.7,746.2L972.8,747.3L973.0,748.3L973.1,747.0L973.3,747.1L973.4,750.4L973.5,748.0L973.7,749.2L973.8,748.0L974.0,747.6L974.1,745.8L974.2,747.4L974.4,747.4L974.5,750.4L974.7,745.7L974.8,743.5L974.9,747.7L975.1,749.7L975.2,746.6L975.4,748.3L975.5,747.1L975.6,748.8L975.8,746.0L975.9,744.7L976.1,748.0L976.2,745.7L976.3,745.6L976.5,747.5L976.6,747.0L976.8,748.3L976.9,746.5L977.0,746.7L977.2,745.3L977.3,746.8L977.5,747.3L977.6,748.4L977.7,750.4L977.9,748.1L978.0,748.9L978.2,746.6L978.3,750.0L978.4,747.2L978.6,750.0L978.7,746.6L978.9,747.4L979.0,750.0L979.1,747.7L979.3,747.1L979.4,746.2L979.6,745.8L979.7,747.8L979.8,748.6L980.0,748.6L980.1,747.3L980.3,746.2L980.4,746.2L980.5,749.0L980.7,746.0L980.8,749.6L981.0,746.6L981.0,707.8L981.1,747.5L981.1,747.0L981.2,747.3L981.4,746.2L981.5,747.7L981.7,746.8L981.8,747.8L981.9,746.0L982.1,747.0L982.2,745.4L982.4,749.1L982.5,745.7L982.6,747.4L982.8,746.6L982.9,748.5L983.1,746.8L983.2,745.5L983.3,746.2L983.5,746.9L983.6,747.7L983.8,746.1L983.9,747.4L984.0,745.7L984.2,749.1L984.3,745.5L984.5,747.9L984.6,746.6L984.7,745.7L984.9,746.2L985.0,746.8L985.2,747.1L985.3,746.3L985.4,747.4L985.6,747.0L985.7,748.2L985.9,747.0L986.0,748.9L986.1,747.9L986.3,746.5L986.4,747.2L986.6,747.2L986.7,749.7L986.8,747.6L987.0,747.7L987.1,749.7L987.3,748.1L987.4,746.2L987.5,748.2L987.7,745.2L987.7,753.2L987.8,747.5L987.8,748.5L988.0,748.8L988.1,747.8L988.2,748.5L988.4,746.4L988.5,749.1L988.7,749.2L988.8,746.6L988.9,746.3L989.1,746.9L989.2,748.1L989.4,748.3L989.5,748.1L989.6,747.0L989.8,747.4L989.9,748.6L990.1,748.1L990.2,747.5L990.3,750.8L990.5,747.2L990.6,746.0L990.8,749.1L990.9,748.3L991.0,748.5L991.2,747.1L991.3,747.7L991.5,744.9L991.6,746.8L991.7,746.1L991.9,747.1L992.0,747.9L992.2,747.4L992.3,749.5L992.4,747.8L992.6,749.4L992.7,746.0L992.9,748.5L993.0,748.8L993.1,748.2L993.3,748.9L993.4,747.6L993.6,748.7L993.7,747.5L993.8,745.3L994.0,746.4L994.1,749.5L994.3,750.5L994.4,746.7L994.5,748.3L994.7,748.9L994.8,746.1L995.0,747.3L995.1,747.0L995.2,748.1L995.4,747.2L995.5,749.3L995.7,745.8L995.8,747.3L995.9,746.7L996.1,747.4L996.2,746.4L996.4,746.9L996.5,746.5L996.6,746.2L996.8,748.3L996.9,748.2L997.1,747.4L997.2,744.9L997.3,746.4L997.5,748.4L997.6,746.3L997.8,747.6L997.9,747.0L998.0,748.1L998.2,748.9L998.3,746.2L998.5,748.6L998.6,748.3L998.7,750.1L998.9,745.6L999.0,746.6L999.2,747.2L999.3,746.8L999.4,750.1L999.6,749.5L999.7,747.1L999.9,748.9L1000.0,747.7L1000.1,747.6L1000.3,746.9L1000.4,744.9L1000.6,745.9L1000.7,746.7L1000.8,748.7L1001.0,747.0L1001.1,749.2L1001.3,746.1L1001.4,745.2L1001.5,746.3L1001.7,748.4L1001.8,746.4L1002.0,747.9L1002.1,747.3L1002.2,747.7L1002.4,746.3L1002.5,747.3L1002.7,748.0L1002.8,748.3L1002.9,748.2L1003.1,745.6L1003.2,746.5L1003.4,747.0L1003.5,747.9L1003.6,747.3L1003.8,748.3L1003.9,746.6L1004.1,745.9L1004.2,747.9L1004.3,746.9L1004.5,748.9L1004.6,747.9L1004.8,746.2L1004.9,746.4L1005.0,749.6L1005.2,747.0L1005.3,746.8L1005.5,747.3L1005.6,748.2L1005.7,747.9L1005.9,749.0L1006.0,748.7L1006.2,748.0L1006.3,749.2L1006.4,748.7L1006.6,747.2L1006.7,747.6L1006.9,746.8L1007.0,747.8L1007.1,749.8L1007.3,749.0L1007.4,748.4L1007.6,749.1L1007.7,746.5L1007.8,750.3L1008.0,747.7L1008.1,746.0L1008.3,747.6L1008.4,748.3L1008.5,748.0L1008.7,748.5L1008.8,749.2L1009.0,747.0L1009.1,748.8L1009.2,747.7L1009.4,747.9L1009.5,744.8L1009.7,749.0L1009.8,746.2L1009.9,746.1L1010.1,748.3L1010.2,746.9L1010.4,747.9L1010.5,747.6L1010.6,746.2L1010.8,746.8L1010.9,747.8L1011.1,747.8L1011.2,747.8L1011.3,745.9L1011.5,747.0L1011.6,747.9L1011.8,747.0L1011.9,746.5L1012.0,748.1L1012.2,746.1L1012.3,749.6L1012.5,748.5L1012.6,747.4L1012.7,743.3L1012.7,753.7L1012.8,747.5L1012.9,748.6L1013.0,744.6L1013.2,748.1L1013.3,747.8L1013.4,748.4L1013.6,748.1L1013.7,747.2L1013.9,748.4L1014.0,746.4L1014.1,748.4L1014.3,747.4L1014.4,747.4L1014.6,748.4L1014.7,748.9L1014.8,748.5L1015.0,746.9L1015.1,747.9L1015.3,748.4L1015.4,747.2L1015.5,748.3L1015.7,747.5L1015.8,748.4L1016.0,745.1L1016.1,747.1L1016.2,747.7L1016.4,745.5L1016.5,749.1L1016.7,747.2L1016.8,746.2L1016.9,748.2L1017.1,746.4L1017.2,748.5L1017.4,747.3L1017.5,746.9L1017.6,746.8L1017.8,747.5L1017.9,747.4L1018.1,749.1L1018.2,746.7L1018.3,747.0L1018.5,746.8L1018.6,748.8L1018.8,746.8L1018.9,747.7L1019.0,747.0L1019.2,745.9L1019.3,746.2L1019.5,748.9L1019.6,745.1L1019.7,747.0L1019.9,745.7L1020.0,748.7L1020.2,743.9L1020.3,746.1L1020.4,748.0L1020.6,747.9L1020.7,746.1L1020.9,748.5L1021.0,747.9L1021.1,746.8L1021.3,746.1L1021.4,746.0L1021.6,746.1L1021.7,747.6L1021.8,750.1L1022.0,746.3L1022.1,747.4L1022.3,746.7L1022.4,748.9L1022.5,745.9L1022.7,747.2L1022.8,745.6L1023.0,745.2L1023.1,747.8L1023.2,747.8L1023.4,746.0L1023.5,749.2L1023.7,747.7L1023.8,746.3L1023.9,748.1L1024.1,745.4L1024.2,747.1L1024.4,747.2L1024.5,749.1L1024.6,748.9L1024.8,748.5L1024.9,748.9L1025.1,748.6L1025.2,746.0L1025.3,745.2L1025.5,750.2L1025.6,746.3L1025.8,747.6L1025.9,747.0L1026.0,745.8L1026.2,747.7L1026.3,750.2L1026.5,749.1L1026.6,746.1L1026.7,748.4L1026.9,747.6L1027.0,747.5L1027.2,748.4L1027.3,748.1L1027.4,743.9L1027.6,747.9L1027.7,745.9L1027.9,747.1L1028.0,745.8L1028.1,745.7L1028.3,746.0L1028.4,748.3L1028.6,748.1L1028.7,747.7L1028.8,746.6L1029.0,748.1L1029.1,746.4L1029.3,747.4L1029.4,745.4L1029.5,746.8L1029.7,748.2L1029.8,746.7L1030.0,747.5L1030.1,750.3L1030.2,747.9L1030.4,749.8L1030.5,748.4L1030.7,747.9L1030.8,746.1L1030.9,747.1L1031.1,747.1L1031.2,747.9L1031.4,747.1L1031.5,747.7L1031.6,748.5L1031.8,746.5L1031.9,749.4L1032.1,746.9L1032.2,747.6L1032.3,747.2L1032.5,746.9L1032.6,746.9L1032.8,746.0L1032.9,746.2L1033.0,747.4L1033.2,749.0L1033.3,751.0L1033.5,747.7L1033.6,748.5L1033.7,748.2L1033.9,745.9L1034.0,747.4L1034.2,747.8L1034.3,750.3L1034.4,748.5L1034.6,747.6L1034.7,745.1L1034.9,747.1L1035.0,746.5L1035.1,746.9L1035.3,747.3L1035.4,747.5L1035.6,746.8L1035.7,747.2L1035.8,749.0L1036.0,748.7L1036.1,748.1L1036.3,747.4L1036.4,746.5L1036.5,746.0L1036.7,747.5L1036.8,749.0L1037.0,749.1L1037.1,746.5L1037.2,749.1L1037.4,749.3L1037.5,751.0L1037.7,749.8L1037.8,744.5L1037.9,748.8L1038.1,747.5L1038.2,747.6L1038.4,749.4L1038.5,746.5L1038.6,746.8L1038.8,746.8L1038.9,748.5L1039.1,747.0L1039.2,747.6L1039.3,747.9L1039.5,747.6L1039.6,749.3L1039.8,748.8L1039.9,749.8L1040.0,747.7L1040.2,746.6L1040.3,745.4L1040.5,747.8L1040.6,745.1L1040.7,747.5L1040.9,747.1L1041.0,747.3L1041.2,747.9L1041.3,748.4L1041.4,748.4L1041.6,747.8L1041.7,748.7L1041.9,746.5L1042.0,745.9L1042.1,746.4L1042.3,748.5L1042.4,748.0L1042.6,747.8L1042.7,747.1L1042.8,746.6L1043.0,747.8L1043.1,747.8L1043.3,745.2L1043.4,747.9L1043.5,745.7L1043.7,746.4L1043.8,749.4L1044.0,747.0L1044.1,747.8L1044.2,747.0L1044.4,746.6L1044.5,745.8L1044.7,748.8L1044.8,747.9L1044.9,748.3L1045.1,745.0L1045.2,747.4L1045.4,748.0L1045.5,746.6L1045.6,749.0L1045.8,747.5L1045.9,748.6L1046.1,748.0L1046.2,748.2L1046.3,748.2L1046.5,747.8L1046.6,746.4L1046.8,747.2L1046.9,746.0L1047.0,747.0L1047.2,748.3L1047.3,749.1L1047.5,745.3L1047.6,745.6L1047.7,745.6L1047.9,748.5L1048.0,748.2L1048.2,747.1L1048.3,749.2L1048.4,747.2L1048.6,745.5L1048.7,747.7L1048.9,748.0L1049.0,748.9L1049.1,745.4L1049.3,746.7L1049.4,748.4L1049.6,744.9L1049.7,746.6L1049.8,748.3L1050.0,748.2L1050.1,746.8L1050.3,747.5L1050.4,746.7L1050.5,746.3L1050.7,748.5L1050.8,748.8L1051.0,746.0L1051.1,745.5L1051.2,747.5L1051.4,749.0L1051.5,744.8L1051.7,748.4L1051.8,750.3L1051.9,749.7L1052.1,746.7L1052.2,745.7L1052.4,748.1L1052.5,747.8L1052.6,748.3L1052.8,750.0L1052.9,748.5L1053.1,748.3L1053.2,748.5L1053.3,746.2L1053.5,746.9L1053.6,747.1L1053.8,747.5L1053.9,747.7L1054.0,747.5L1054.2,746.5L1054.3,747.9L1054.5,748.5L1054.6,748.0L1054.7,745.2L1054.9,747.5L1055.0,750.3L1055.2,747.1L1055.3,747.4L1055.4,746.6L1055.6,747.8L1055.7,747.2L1055.9,747.5L1056.0,746.8L1056.1,747.7L1056.3,749.6L1056.4,747.5L1056.6,749.2L1056.7,748.9L1056.8,745.6L1057.0,748.1L1057.1,747.4L1057.3,748.2L1057.4,746.8L1057.5,746.9L1057.7,746.3L1057.8,747.9L1058.0,746.7L1058.1,747.8L1058.2,748.6L1058.4,748.9L1058.5,746.5L1058.7,749.7L1058.8,747.1L1058.9,748.3L1059.1,746.8L1059.2,747.2L1059.4,748.2L1059.5,745.5L1059.6,746.4L1059.8,746.0L1059.9,746.5L1060.1,749.6L1060.2,746.3L1060.3,748.7L1060.5,746.8L1060.6,746.9L1060.8,747.4L1060.9,747.0L1061.0,747.6L1061.2,747.8L1061.3,748.5L1061.5,748.0L1061.6,748.7L1061.7,747.7L1061.9,750.1L1062.0,746.2L1062.2,746.2L1062.3,749.7L1062.4,747.8L1062.6,746.3L1062.7,748.7L1062.9,749.4L1063.0,746.9L1063.1,746.5L1063.3,747.0L1063.4,748.5L1063.6,749.4L1063.7,746.7L1063.8,748.1L1064.0,746.8L1064.1,746.4L1064.3,744.3L1064.4,747.2L1064.5,750.4L1064.7,746.2L1064.8,749.9L1065.0,747.6L1065.1,749.6L1065.2,746.6L1065.4,745.3L1065.5,747.4L1065.7,747.9L1065.8,748.5L1065.9,748.3L1066.1,747.6L1066.2,746.7L1066.4,750.3L1066.5,748.8L1066.6,749.1L1066.8,748.0L1066.9,748.0L1067.1,746.3L1067.2,748.8L1067.3,745.9L1067.5,746.9L1067.6,747.7L1067.8,746.7L1067.9,746.2L1068.0,746.7L1068.2,748.1L1068.3,747.8L1068.5,748.6L1068.6,748.0L1068.7,749.5L1068.9,749.8L1069.0,746.3L1069.2,748.5L1069.3,747.4L1069.4,749.0L1069.6,747.3L1069.7,748.9L1069.9,748.0L1070.0,747.2L1070.1,748.3L1070.3,744.9L1070.4,746.8L1070.6,746.1L1070.7,744.5L1070.8,745.3L1071.0,747.1L1071.1,749.0L1071.3,747.0L1071.4,747.9L1071.5,746.8L1071.7,747.6L1071.8,748.1L1072.0,746.9L1072.1,744.4L1072.2,746.5L1072.4,746.4L1072.5,747.5L1072.7,746.8L1072.8,745.8L1072.9,747.8L1073.1,749.8L1073.2,747.5L1073.4,747.4L1073.5,746.5L1073.6,746.5L1073.8,748.4L1073.9,745.4L1074.1,746.3L1074.2,748.0L1074.3,748.5L1074.5,748.5L1074.6,746.2L1074.8,750.4L1074.9,746.1L1075.0,749.4L1075.2,747.3L1075.3,750.0L1075.5,746.4L1075.6,746.5L1075.7,747.0L1075.9,747.0L1076.0,745.9L1076.2,747.8L1076.3,745.6L1076.4,748.3L1076.6,747.2L1076.7,749.3L1076.9,746.9L1077.0,746.3L1077.1,747.6L1077.3,746.1L1077.4,746.2L1077.6,747.4L1077.7,746.1L1077.8,748.9L1078.0,746.0L1078.1,748.3L1078.3,748.9L1078.4,747.5L1078.5,749.5L1078.7,748.1L1078.8,747.5L1079.0,747.5L1079.1,745.7L1079.2,747.0L1079.4,747.8L1079.5,747.8L1079.7,748.5L1079.8,747.8L1079.9,747.0L1080.1,746.9L1080.2,747.9L1080.4,746.6L1080.5,748.1L1080.6,748.5L1080.8,749.5L1080.9,747.4L1081.1,746.5L1081.2,749.2L1081.3,747.5L1081.5,747.0L1081.6,746.4L1081.8,747.3L1081.9,745.2L1082.0,749.0L1082.2,748.8L1082.3,746.2L1082.5,747.0L1082.6,749.0L1082.7,746.9L1082.9,748.6L1083.0,747.4L1083.2,748.9L1083.3,744.6L1083.4,747.3L1083.6,748.9L1083.7,749.4L1083.9,744.4L1084.0,750.6L1084.1,748.9L1084.3,749.6L1084.4,746.7L1084.6,746.9L1084.7,746.0L1084.8,746.7L1085.0,749.0L1085.1,747.1L1085.3,747.9L1085.4,746.7L1085.5,746.6L1085.7,749.4L1085.8,749.1L1086.0,748.8L1086.1,747.7L1086.2,746.8L1086.4,748.1L1086.5,749.1L1086.7,748.6L1086.8,747.2L1086.9,748.2L1087.1,747.3L1087.2,747.6L1087.4,746.9L1087.5,749.3L1087.6,747.8L1087.8,747.5L1087.9,747.9L1088.1,746.4L1088.2,747.5L1088.3,747.3L1088.5,749.1L1088.6,746.8L1088.8,748.8L1088.9,747.6L1089.0,746.6L1089.2,747.2L1089.3,748.0L1089.5,745.0L1089.6,746.7L1089.7,745.4L1089.9,747.0L1090.0,747.4L1090.2,748.3L1090.3,746.6L1090.4,748.5L1090.6,745.4L1090.7,745.2L1090.9,746.5L1091.0,749.9L1091.1,747.5L1091.3,749.6L1091.4,747.4L1091.6,750.2L1091.7,746.2L1091.8,747.7L1092.0,747.2L1092.1,748.6L1092.3,747.3L1092.4,744.0L1092.5,748.7L1092.7,748.8L1092.8,747.2L1093.0,746.7L1093.1,748.2L1093.2,746.4L1093.4,746.8L1093.5,748.2L1093.7,746.2L1093.8,748.1L1093.9,745.5L1094.1,748.6L1094.2,749.2L1094.4,746.9L1094.5,745.3L1094.6,748.8L1094.8,747.6L1094.9,746.4L1095.1,747.2L1095.2,747.0L1095.3,748.9L1095.5,748.6L1095.6,747.1L1095.8,745.5L1095.9,748.6L1096.0,745.7L1096.0,739.9L1096.1,747.5L1096.2,745.7L1096.3,748.8L1096.5,745.7L1096.6,748.2L1096.7,746.3L1096.9,750.1L1097.0,749.6L1097.2,747.7L1097.3,748.0L1097.4,746.7L1097.6,748.4L1097.7,747.4L1097.9,748.9L1098.0,747.1L1098.1,747.3L1098.3,746.5L1098.4,747.9L1098.6,747.4L1098.7,747.5L1098.8,747.9L1099.0,747.6L1099.1,747.7L1099.3,748.2L1099.4,747.1L1099.5,748.2L1099.7,748.3L1099.8,746.4L1100.0,748.7L1100.1,750.5L1100.2,747.2L1100.4,746.9L1100.5,747.7L1100.7,748.5L1100.8,748.5L1100.9,744.9L1101.1,746.7L1101.2,746.3L1101.4,747.9L1101.5,747.1L1101.6,747.4L1101.8,747.9L1101.9,748.0L1102.1,748.5L1102.2,748.2L1102.3,747.8L1102.5,746.6L1102.6,748.5L1102.8,747.9L1102.9,748.9L1103.0,744.9L1103.2,749.8L1103.3,748.1L1103.5,747.1L1103.6,746.7L1103.7,746.5L1103.9,750.3L1104.0,747.4L1104.2,747.8L1104.3,745.0L1104.4,748.5L1104.6,749.9L1104.7,747.2L1104.7,709.0L1104.8,747.5L1104.9,746.6L1105.0,748.7L1105.1,747.4L1105.3,747.0L1105.4,748.9L1105.6,745.7L1105.7,746.8L1105.8,747.1L1106.0,746.7L1106.1,746.8L1106.3,747.9L1106.4,750.1L1106.5,746.7L1106.7,748.7L1106.8,748.9L1107.0,746.9L1107.1,749.4L1107.2,747.2L1107.4,745.6L1107.5,746.4L1107.7,748.0L1107.8,746.6L1107.9,748.7L1108.1,747.7L1108.2,748.4L1108.4,747.5L1108.5,748.2L1108.6,746.2L1108.8,748.9L1108.9,745.8L1109.1,746.2L1109.2,748.5L1109.3,748.7L1109.5,749.0L1109.6,746.1L1109.8,747.4L1109.9,746.9L1110.0,747.6L1110.2,747.7L1110.3,748.2L1110.5,748.5L1110.6,747.4L1110.7,749.1L1110.9,747.2L1111.0,750.0L1111.2,747.8L1111.3,747.0L1111.4,749.2L1111.6,749.6L1111.7,746.8L1111.9,747.9L1112.0,749.0L1112.1,746.0L1112.3,748.0L1112.4,747.4L1112.6,748.4L1112.7,747.9L1112.8,748.7L1113.0,748.2L1113.1,747.8L1113.3,747.3L1113.4,747.4L1113.5,749.7L1113.7,748.1L1113.8,748.9L1114.0,748.0L1114.1,745.7L1114.2,749.1L1114.4,746.4L1114.5,748.5L1114.7,747.7L1114.8,745.0L1114.9,746.5L1115.1,745.3L1115.2,748.0L1115.4,746.6L1115.5,748.0L1115.6,747.2L1115.8,748.1L1115.9,746.7L1116.1,747.0L1116.2,746.8L1116.3,747.6L1116.5,745.8L1116.6,747.5L1116.8,746.2L1116.9,748.6L1117.0,748.8L1117.2,748.9L1117.3,747.9L1117.5,748.1L1117.6,745.7L1117.7,748.4L1117.9,746.2L1118.0,746.0L1118.2,747.6L1118.3,747.6L1118.4,747.3L1118.6,749.6L1118.7,748.5L1118.9,745.7L1119.0,746.4L1119.1,748.0L1119.3,747.5L1119.4,747.3L1119.6,747.6L1119.7,748.4L1119.8,747.0L1120.0,748.4L1120.1,746.0L1120.3,747.3L1120.4,746.9L1120.5,749.6L1120.7,746.2L1120.8,749.0L1121.0,748.3L1121.1,749.0L1121.2,748.2L1121.4,746.6L1121.5,747.5L1121.7,746.2L1121.8,747.0L1121.9,746.0L1122.1,746.7L1122.2,748.1L1122.4,747.6L1122.5,748.6L1122.6,747.4L1122.8,747.2L1122.9,746.1L1123.1,747.9L1123.2,749.0L1123.3,745.6L1123.5,748.1L1123.6,748.1L1123.8,747.6L1123.9,748.1L1124.0,747.4L1124.2,748.7L1124.3,748.0L1124.5,748.2L1124.6,748.6L1124.7,747.7L1124.9,746.5L1125.0,747.0L1125.2,749.2L1125.3,746.3L1125.4,747.9L1125.6,746.6L1125.7,747.3L1125.9,748.3L1126.0,747.5L1126.1,749.1L1126.3,748.3L1126.4,747.1L1126.6,749.6L1126.7,748.9L1126.8,748.9L1127.0,746.2L1127.1,746.6L1127.3,747.1L1127.4,745.5L1127.5,747.9L1127.7,746.7L1127.8,746.8L1128.0,747.9L1128.1,748.5L1128.2,746.0L1128.4,748.7L1128.5,747.1L1128.7,749.5L1128.8,749.7L1128.9,747.3L1129.1,748.6L1129.2,746.6L1129.4,747.9L1129.5,747.8L1129.6,748.2L1129.8,749.4L1129.9,747.9L1130.1,746.3L1130.2,747.7L1130.3,748.6L1130.5,746.7L1130.6,745.4L1130.8,748.9L1130.9,747.7L1131.0,748.7L1131.2,746.6L1131.3,748.6L1131.5,747.3L1131.6,750.2L1131.7,748.9L1131.9,748.5L1132.0,748.2L1132.2,748.7L1132.3,745.5L1132.4,749.0L1132.6,746.7L1132.7,748.6L1132.9,747.9L1133.0,748.0L1133.1,748.0L1133.3,747.3L1133.4,746.8L1133.6,748.8L1133.7,746.1L1133.8,747.8L1134.0,747.6L1134.1,747.2L1134.3,746.7L1134.4,749.5L1134.5,746.3L1134.7,748.4L1134.8,748.7L1135.0,745.0L1135.1,747.8L1135.2,750.1L1135.4,749.0L1135.5,748.5L1135.7,747.1L1135.8,748.1L1135.9,745.9L1136.1,747.6L1136.2,747.4L1136.4,745.3L1136.5,747.3L1136.6,746.6L1136.8,747.0L1136.9,748.8L1137.1,746.8L1137.2,746.4L1137.3,747.1L1137.5,744.6L1137.6,747.9L1137.8,745.5L1137.9,747.4L1138.0,748.6L1138.2,747.9L1138.3,747.5L1138.5,746.8L1138.6,747.4L1138.7,746.1L1138.9,745.5L1139.0,747.2L1139.2,747.9L1139.3,747.7L1139.4,746.3L1139.6,747.3L1139.7,747.2L1139.9,750.4L1140.0,746.4L1140.1,747.4L1140.3,747.8L1140.4,748.2L1140.6,745.3L1140.7,748.3L1140.8,747.7L1141.0,746.4L1141.1,746.6L1141.3,748.3L1141.4,748.8L1141.5,746.3L1141.7,748.1L1141.8,752.7L1142.0,747.4L1142.1,746.4L1142.2,749.0L1142.4,747.8L1142.5,749.1L1142.7,747.7L1142.8,748.2L1142.9,750.2L1143.1,747.9L1143.2,746.8L1143.4,746.8L1143.5,748.2L1143.6,746.8L1143.8,748.2L1143.9,746.1L1144.1,746.6L1144.2,747.4L1144.3,747.8L1144.5,746.4L1144.6,747.8L1144.8,746.8L1144.9,746.5L1145.0,746.4L1145.2,748.9L1145.3,749.0L1145.5,748.0L1145.6,746.9L1145.7,748.8L1145.9,747.1L1146.0,745.9L1146.2,747.8L1146.3,750.0L1146.4,747.1L1146.6,743.9L1146.7,748.6L1146.9,746.8L1147.0,748.3L1147.1,747.5L1147.3,749.3L1147.4,746.9L1147.6,748.0L1147.7,748.3L1147.8,748.2L1148.0,749.1L1148.1,748.9L1148.3,746.3L1148.4,745.8L1148.5,747.0L1148.7,747.3L1148.8,746.1L1149.0,749.3L1149.1,746.7L1149.2,748.1L1149.4,748.9L1149.5,746.2L1149.7,745.8L1149.8,749.5L1149.9,744.9L1150.1,747.6L1150.2,745.3L1150.4,749.3L1150.5,747.1L1150.6,746.3L1150.8,745.9L1150.9,745.3L1151.1,748.9L1151.2,747.3L1151.3,747.8L1151.5,750.0L1151.6,747.2L1151.8,746.9L1151.9,748.4L1152.0,745.7L1152.2,747.8L1152.3,746.0L1152.5,747.1L1152.6,747.8L1152.7,747.7L1152.9,749.0L1153.0,746.6L1153.2,745.4L1153.3,745.7L1153.4,747.5L1153.6,745.9L1153.7,746.1L1153.9,748.1L1154.0,750.2L1154.1,746.7L1154.3,750.0L1154.4,747.7L1154.6,746.4L1154.7,746.5L1154.8,748.4L1155.0,748.0L1155.1,746.2L1155.3,747.9L1155.4,748.5L1155.5,748.5L1155.7,749.1L1155.8,751.2L1156.0,747.1L1156.1,746.9L1156.2,749.0L1156.4,746.8L1156.5,744.6L1156.7,748.1L1156.8,749.7L1156.9,747.2L1157.1,746.4L1157.2,749.4L1157.4,749.7L1157.5,747.4L1157.6,747.3L1157.8,746.5L1157.9,745.5L1158.1,749.1L1158.2,747.4L1158.3,747.8L1158.5,747.6L1158.6,746.4L1158.8,748.5L1158.9,748.1L1159.0,747.0L1159.2,747.4L1159.3,747.5L1159.5,747.5L1159.6,743.6L1159.7,748.0L1159.9,746.9L1160.0,747.3L1160.2,748.4L1160.3,746.2L1160.4,747.3L1160.6,746.7L1160.7,748.2L1160.9,746.4L1161.0,747.5L1161.1,747.9L1161.3,748.2L1161.4,749.1L1161.6,746.3L1161.7,747.4L1161.8,749.1L1162.0,747.9L1162.1,747.0L1162.3,747.5L1162.4,746.0L1162.5,748.0L1162.7,748.4L1162.8,750.1L1163.0,747.6L1163.1,747.1L1163.2,746.8L1163.4,747.4L1163.5,747.3L1163.7,747.5L1163.8,747.8L1163.9,747.9L1164.1,747.9L1164.2,749.3L1164.4,747.6L1164.5,745.0L1164.6,746.2L1164.8,745.6L1164.9,747.3L1165.1,748.9L1165.2,748.7L1165.3,747.4L1165.5,749.4L1165.6,746.7L1165.8,747.2L1165.9,745.2L1166.0,746.9L1166.2,748.1L1166.3,747.5L1166.5,745.8L1166.6,747.6L1166.7,746.3L1166.9,745.6L1167.0,749.5L1167.2,747.8L1167.3,745.9L1167.4,745.7L1167.6,746.6L1167.7,748.5L1167.9,748.0L1168.0,747.5L1168.1,749.4L1168.3,746.9L1168.4,747.0L1168.6,746.1L1168.7,745.8L1168.8,745.6L1169.0,749.3L1169.1,748.9L1169.3,746.0L1169.4,747.1L1169.5,747.0L1169.7,750.2L1169.8,749.2L1170.0,746.1L1170.1,747.6L1170.2,744.9L1170.4,747.9L1170.5,747.9L1170.7,744.7L1170.8,746.6L1170.9,747.8L1171.1,747.1L1171.2,748.4L1171.4,747.5L1171.5,746.2L1171.6,748.4L1171.8,745.9L1171.9,744.2L1172.1,749.6L1172.2,748.3L1172.3,748.1L1172.5,751.4L1172.6,748.4L1172.8,750.6L1172.9,749.0L1173.0,748.1L1173.2,749.1L1173.3,747.9L1173.5,749.9L1173.6,748.8L1173.7,751.4L1173.9,752.0L1174.0,747.3L1174.2,748.6L1174.3,748.2L1174.4,752.8L1174.6,748.8L1174.7,748.4L1174.9,745.4L1175.0,752.5L1175.1,751.1L1175.3,747.2L1175.4,750.4L1175.6,751.4L1175.7,747.0L1175.8,746.5L1176.0,749.3L1176.1,747.5L1176.3,749.5L1176.4,748.2L1176.5,748.8L1176.7,748.1L1176.8,751.8L1177.0,744.4L1177.1,749.8L1177.2,750.6L1177.4,752.1L1177.5,749.5L1177.7,750.7L1177.8,749.5L1177.9,751.3L1178.1,747.6L1178.2,751.7L1178.4,748.6L1178.5,750.3L1178.6,747.4L1178.8,750.8L1178.9,749.2L1179.1,751.0L1179.2,749.4L1179.3,751.0L1179.5,749.6L1179.6,749.5L1179.8,752.0L1179.9,748.6L1180.0,751.7L1180.2,748.9L1180.3,745.1L1180.5,748.5L1180.6,746.8L1180.7,749.6L1180.9,749.9L1181.0,748.0L1181.2,751.6L1181.3,752.1L1181.4,753.4L1181.6,745.3L1181.7,752.6L1181.9,748.0L1182.0,749.6L1182.1,748.3L1182.3,750.9L1182.4,749.2L1182.6,750.9L1182.7,749.8L1182.8,754.7L1183.0,746.4L1183.1,749.6L1183.3,749.9L1183.4,749.0L1183.5,746.6L1183.7,749.9L1183.8,753.0L1184.0,749.0L1184.1,751.6L1184.2,751.1L1184.4,749.9L1184.5,750.5" fill="none" stroke="#0000ff" stroke-width="1.5" stroke-linejoin="bevel"/>
<rect x="1108.9" y="519.80" width="72.7" height="16.3" rx="2" ry="2" fill="#ffffff" fill-opacity="0.8" stroke="#cccccc" stroke-width="1"/>
<line x1="1111.60" y1="527.90" x2="1133.40" y2="527.90" stroke="#0000ff" stroke-width="1.5"/>
<rect x="1108.9" y="691.70" width="72.7" height="16.3" rx="2" ry="2" fill="#ffffff" fill-opacity="0.8" stroke="#cccccc" stroke-width="1"/>
<line x1="1111.60" y1="699.80" x2="1133.40" y2="699.80" stroke="#0000ff" stroke-width="1.5"/>
<line x1="391.45" y1="170.10" x2="391.45" y2="752.40" stroke="#0000ff" stroke-width="1.1"/>
<line x1="100.00" y1="461.45" x2="683.00" y2="461.45" stroke="#0000ff" stroke-width="1.1"/>
<rect x="105.9" y="175.8" width="570.2" height="570.0" fill="none" stroke="#000" stroke-width="1.6"/>
<rect x="712.0" y="113.0" width="35.2" height="696.0" fill="none" stroke="#000" stroke-width="1.6"/>
<rect x="910.9" y="112.8" width="274.3" height="119.90" fill="none" stroke="#000" stroke-width="1.6"/>
<rect x="910.9" y="285.0" width="274.3" height="119.60" fill="none" stroke="#000" stroke-width="1.6"/>
<rect x="910.9" y="516.7" width="274.3" height="120.30" fill="none" stroke="#000" stroke-width="1.6"/>
<rect x="910.9" y="688.9" width="274.3" height="119.90" fill="none" stroke="#000" stroke-width="1.6"/>
<text x="6.48" y="22.90" font-size="17.67" textLength="164.90" lengthAdjust="spacingAndGlyphs">2025-05-26: HAWKI</text>
<text x="336.02" y="23.10" font-size="13.25" textLength="55.45" lengthAdjust="spacingAndGlyphs">type info</text>
<text x="628.50" y="23.00" font-size="13.25" textLength="67.44" lengthAdjust="spacingAndGlyphs">set-up info</text>
<text x="7.16" y="44.80" font-size="13.25" textLength="60.09" lengthAdjust="spacingAndGlyphs">ORIGFILE:</text>
<text x="74.85" y="44.80" font-size="13.25" textLength="241.14" lengthAdjust="spacingAndGlyphs">HAWKI_IMG_DARK_Darks147_0059.fits</text>
<text x="7.18" y="62.00" font-size="13.25" textLength="54.26" lengthAdjust="spacingAndGlyphs">ARCFILE:</text>
<text x="74.64" y="62.00" font-size="13.25" textLength="232.93" lengthAdjust="spacingAndGlyphs">HAWKI.2025-05-27T11:07:58.451.fits</text>
<text x="6.41" y="79.90" font-size="13.25" textLength="61.45" lengthAdjust="spacingAndGlyphs">raw_type:</text>
<text x="74.75" y="79.90" font-size="13.25" textLength="34.70" lengthAdjust="spacingAndGlyphs">DARK</text>
<text x="7.17" y="97.00" font-size="13.25" textLength="56.40" lengthAdjust="spacingAndGlyphs">do_class:</text>
<text x="74.98" y="97.00" font-size="13.25" textLength="35.25" lengthAdjust="spacingAndGlyphs">DARK</text>
<text x="7.08" y="113.50" font-size="13.25" textLength="64.15" lengthAdjust="spacingAndGlyphs">extension:</text>
<text x="76.13" y="113.50" font-size="13.25" textLength="7.34" lengthAdjust="spacingAndGlyphs">2</text>
<text x="335.29" y="44.90" font-size="13.25" textLength="69.07" lengthAdjust="spacingAndGlyphs">DPR.CATG:</text>
<text x="404.76" y="44.90" font-size="13.25" textLength="35.74" lengthAdjust="spacingAndGlyphs">CALIB</text>
<text x="335.54" y="62.20" font-size="13.25" textLength="64.38" lengthAdjust="spacingAndGlyphs">DPR.TYPE:</text>
<text x="404.50" y="62.20" font-size="13.25" textLength="35.78" lengthAdjust="spacingAndGlyphs">DARK</text>
<text x="335.37" y="79.50" font-size="13.25" textLength="67.74" lengthAdjust="spacingAndGlyphs">DPR.TECH:</text>
<text x="404.33" y="79.50" font-size="13.25" textLength="41.24" lengthAdjust="spacingAndGlyphs">IMAGE</text>
<text x="336.10" y="96.80" font-size="13.25" textLength="43.76" lengthAdjust="spacingAndGlyphs">TPL.ID:</text>
<text x="404.38" y="96.80" font-size="13.25" textLength="139.66" lengthAdjust="spacingAndGlyphs">HAWKI_img_cal_Darks</text>
<text x="628.28" y="42.90" font-size="11.05" textLength="107.01" lengthAdjust="spacingAndGlyphs">DET.NCORRS.NAME:</text>
<text x="758.62" y="42.90" font-size="11.05" textLength="45.30" lengthAdjust="spacingAndGlyphs">NonDest</text>
<text x="628.27" y="55.80" font-size="11.05" textLength="45.50" lengthAdjust="spacingAndGlyphs">DET.DIT:</text>
<text x="759.45" y="55.80" font-size="11.05" textLength="61.38" lengthAdjust="spacingAndGlyphs">10.0000000</text>
<text x="628.29" y="68.50" font-size="11.05" textLength="53.70" lengthAdjust="spacingAndGlyphs">DET.NDIT:</text>
<text x="759.89" y="68.50" font-size="11.05" textLength="6.82" lengthAdjust="spacingAndGlyphs">6</text>
<text x="628.32" y="81.40" font-size="11.05" textLength="69.71" lengthAdjust="spacingAndGlyphs">DET.RSPEED:</text>
<text x="760.02" y="81.40" font-size="11.05" textLength="6.57" lengthAdjust="spacingAndGlyphs">8</text>
<text x="6.69" y="864.00" font-size="11.05" textLength="173.66" lengthAdjust="spacingAndGlyphs">powered by QC: www.eso.org/HC</text>
<text x="935.64" y="864.00" font-size="11.05" textLength="303.44" lengthAdjust="spacingAndGlyphs">created by qc_rawdisp.py v1.2.3 on 2025-05-27T12:37:55</text>
<text x="878.30" y="210.42" font-size="11.05" textLength="72.90" lengthAdjust="spacingAndGlyphs" transform="rotate(-90 878.30 210.42)">log frequency</text>
<text x="1194.30" y="128.02" font-size="11.05" textLength="93.87" lengthAdjust="spacingAndGlyphs" transform="rotate(90 1194.30 128.02)">histogram (detail)</text>
<text x="878.30" y="382.62" font-size="11.05" textLength="73.61" lengthAdjust="spacingAndGlyphs" transform="rotate(-90 878.30 382.62)">log frequency</text>
<text x="1194.30" y="309.19" font-size="11.05" textLength="80.57" lengthAdjust="spacingAndGlyphs" transform="rotate(90 1194.30 309.19)">histogram (full)</text>
<text x="857.30" y="594.82" font-size="11.05" textLength="34.00" lengthAdjust="spacingAndGlyphs" transform="rotate(-90 857.30 594.82)">counts</text>
<text x="1193.40" y="555.48" font-size="11.05" textLength="39.37" lengthAdjust="spacingAndGlyphs" transform="rotate(90 1193.40 555.48)">cut in x</text>
<text x="857.30" y="768.27" font-size="11.05" textLength="34.50" lengthAdjust="spacingAndGlyphs" transform="rotate(-90 857.30 768.27)">counts</text>
<text x="1193.40" y="729.16" font-size="11.05" textLength="39.38" lengthAdjust="spacingAndGlyphs" transform="rotate(90 1193.40 729.16)">cut in y</text>
<text x="103.09" y="769.00" font-size="11.05" textLength="5.34" lengthAdjust="spacingAndGlyphs">0</text>
<text x="84.47" y="750.50" font-size="11.05" textLength="5.79" lengthAdjust="spacingAndGlyphs">0</text>
<text x="166.10" y="769.00" font-size="11.05" textLength="18.60" lengthAdjust="spacingAndGlyphs">250</text>
<text x="71.38" y="680.90" font-size="11.05" textLength="18.76" lengthAdjust="spacingAndGlyphs">250</text>
<text x="235.70" y="769.00" font-size="11.05" textLength="18.86" lengthAdjust="spacingAndGlyphs">500</text>
<text x="71.43" y="611.30" font-size="11.05" textLength="18.80" lengthAdjust="spacingAndGlyphs">500</text>
<text x="305.38" y="769.00" font-size="11.05" textLength="18.66" lengthAdjust="spacingAndGlyphs">750</text>
<text x="71.47" y="541.70" font-size="11.05" textLength="18.75" lengthAdjust="spacingAndGlyphs">750</text>
<text x="371.64" y="769.00" font-size="11.05" textLength="25.43" lengthAdjust="spacingAndGlyphs">1000</text>
<text x="64.76" y="472.10" font-size="11.05" textLength="25.47" lengthAdjust="spacingAndGlyphs">1000</text>
<text x="441.18" y="769.00" font-size="11.05" textLength="25.42" lengthAdjust="spacingAndGlyphs">1250</text>
<text x="64.76" y="402.50" font-size="11.05" textLength="25.47" lengthAdjust="spacingAndGlyphs">1250</text>
<text x="511.06" y="769.00" font-size="11.05" textLength="25.43" lengthAdjust="spacingAndGlyphs">1500</text>
<text x="64.76" y="332.90" font-size="11.05" textLength="25.47" lengthAdjust="spacingAndGlyphs">1500</text>
<text x="580.50" y="769.00" font-size="11.05" textLength="25.51" lengthAdjust="spacingAndGlyphs">1750</text>
<text x="64.76" y="263.30" font-size="11.05" textLength="25.47" lengthAdjust="spacingAndGlyphs">1750</text>
<text x="650.14" y="769.00" font-size="11.05" textLength="25.56" lengthAdjust="spacingAndGlyphs">2000</text>
<text x="64.67" y="193.70" font-size="11.05" textLength="25.55" lengthAdjust="spacingAndGlyphs">2000</text>
<text x="388.34" y="786.90" font-size="11.05" textLength="6.74" lengthAdjust="spacingAndGlyphs">X</text>
<text x="762.75" y="207.58" font-size="11.05" textLength="5.31" lengthAdjust="spacingAndGlyphs">4</text>
<text x="762.40" y="342.64" font-size="11.05" textLength="5.15" lengthAdjust="spacingAndGlyphs">2</text>
<text x="762.59" y="477.70" font-size="11.05" textLength="5.32" lengthAdjust="spacingAndGlyphs">0</text>
<text x="762.23" y="612.76" font-size="11.05" textLength="14.07" lengthAdjust="spacingAndGlyphs">−2</text>
<text x="762.23" y="747.82" font-size="11.05" textLength="14.20" lengthAdjust="spacingAndGlyphs">−4</text>
<text x="904.56" y="255.90" font-size="11.05" textLength="22.67" lengthAdjust="spacingAndGlyphs">-300</text>
<text x="994.10" y="255.90" font-size="11.05" textLength="22.58" lengthAdjust="spacingAndGlyphs">-100</text>
<text x="1085.86" y="255.90" font-size="11.05" textLength="18.83" lengthAdjust="spacingAndGlyphs">100</text>
<text x="1175.54" y="255.90" font-size="11.05" textLength="18.54" lengthAdjust="spacingAndGlyphs">300</text>
<text x="890.86" y="128.60" font-size="11.05" textLength="5.60" lengthAdjust="spacingAndGlyphs">6</text>
<text x="890.78" y="166.80" font-size="11.05" textLength="5.21" lengthAdjust="spacingAndGlyphs">4</text>
<text x="891.21" y="204.80" font-size="11.05" textLength="5.08" lengthAdjust="spacingAndGlyphs">2</text>
<text x="1030.96" y="274.00" font-size="11.05" textLength="33.97" lengthAdjust="spacingAndGlyphs">counts</text>
<text x="926.21" y="428.40" font-size="11.05" textLength="5.29" lengthAdjust="spacingAndGlyphs">0</text>
<text x="987.66" y="428.40" font-size="11.05" textLength="31.88" lengthAdjust="spacingAndGlyphs">20000</text>
<text x="1062.34" y="428.40" font-size="11.05" textLength="31.77" lengthAdjust="spacingAndGlyphs">40000</text>
<text x="1136.62" y="428.40" font-size="11.05" textLength="32.01" lengthAdjust="spacingAndGlyphs">60000</text>
<text x="890.84" y="408.40" font-size="11.05" textLength="5.33" lengthAdjust="spacingAndGlyphs">0</text>
<text x="891.21" y="374.20" font-size="11.05" textLength="5.08" lengthAdjust="spacingAndGlyphs">2</text>
<text x="890.78" y="340.00" font-size="11.05" textLength="5.21" lengthAdjust="spacingAndGlyphs">4</text>
<text x="890.86" y="305.80" font-size="11.05" textLength="5.60" lengthAdjust="spacingAndGlyphs">6</text>
<text x="1030.96" y="445.90" font-size="11.05" textLength="33.97" lengthAdjust="spacingAndGlyphs">counts</text>
<text x="908.76" y="660.00" font-size="11.05" textLength="5.58" lengthAdjust="spacingAndGlyphs">0</text>
<text x="968.90" y="660.00" font-size="11.05" textLength="18.59" lengthAdjust="spacingAndGlyphs">500</text>
<text x="1032.24" y="660.00" font-size="11.05" textLength="25.26" lengthAdjust="spacingAndGlyphs">1000</text>
<text x="1098.91" y="660.00" font-size="11.05" textLength="25.38" lengthAdjust="spacingAndGlyphs">1500</text>
<text x="1165.42" y="660.00" font-size="11.05" textLength="25.36" lengthAdjust="spacingAndGlyphs">2000</text>
<text x="876.91" y="539.80" font-size="11.05" textLength="19.12" lengthAdjust="spacingAndGlyphs">200</text>
<text x="890.32" y="579.60" font-size="11.05" textLength="5.28" lengthAdjust="spacingAndGlyphs">0</text>
<text x="868.12" y="619.40" font-size="11.05" textLength="27.60" lengthAdjust="spacingAndGlyphs">−200</text>
<text x="1044.40" y="678.00" font-size="11.05" textLength="6.75" lengthAdjust="spacingAndGlyphs">X</text>
<text x="908.76" y="832.20" font-size="11.05" textLength="5.58" lengthAdjust="spacingAndGlyphs">0</text>
<text x="968.90" y="832.20" font-size="11.05" textLength="18.59" lengthAdjust="spacingAndGlyphs">500</text>
<text x="1032.24" y="832.20" font-size="11.05" textLength="25.26" lengthAdjust="spacingAndGlyphs">1000</text>
<text x="1098.91" y="832.20" font-size="11.05" textLength="25.38" lengthAdjust="spacingAndGlyphs">1500</text>
<text x="1165.42" y="832.20" font-size="11.05" textLength="25.36" lengthAdjust="spacingAndGlyphs">2000</text>
<text x="876.91" y="711.90" font-size="11.05" textLength="19.12" lengthAdjust="spacingAndGlyphs">200</text>
<text x="890.32" y="751.70" font-size="11.05" textLength="5.28" lengthAdjust="spacingAndGlyphs">0</text>
<text x="868.12" y="791.50" font-size="11.05" textLength="27.60" lengthAdjust="spacingAndGlyphs">−200</text>
<text x="1044.40" y="850.20" font-size="11.05" textLength="7.00" lengthAdjust="spacingAndGlyphs">Y</text>
<text x="1137.17" y="531.00" font-size="11.05" textLength="39.90" lengthAdjust="spacingAndGlyphs">y=1024</text>
<text x="1137.01" y="702.90" font-size="11.05" textLength="39.99" lengthAdjust="spacingAndGlyphs">x=1024</text>
</svg>
<script>
(function(){
var c=document.getElementById('img'),ctx=c.getContext('2d');
var W=570,H=570,im=ctx.createImageData(W,H),D=im.data;
var s=123456789;
function rnd(){s^=s<<13;s>>>=0;s^=s>>>17;s^=s<<5;s>>>=0;return s/4294967296;}
function gauss(){var u=rnd()||1e-9,v=rnd();return Math.sqrt(-2*Math.log(u))*Math.cos(6.2831853*v);}
var VMIN=-4.96,VMAX=5.34,SIG=2.9,PO=0.14,OA=3.5,P=35.65,M0=0.95,M1=-2.7;
function dseg(px,py,ax,ay,bx,by){var dx=bx-ax,dy=by-ay,t=((px-ax)*dx+(py-ay)*dy)/(dx*dx+dy*dy);t=t<0?0:(t>1?1:t);var qx=ax+t*dx-px,qy=ay+t*dy-py;return Math.sqrt(qx*qx+qy*qy);}
var GS=3,GW=Math.ceil(W/GS)+2,GH=Math.ceil(H/GS)+2,G=new Float32Array(GW*GH);
for(var i=0;i<GW*GH;i++) G[i]=gauss();
function lf(x,y){var fx=x/GS,fy=y/GS,ix=Math.floor(fx),iy=Math.floor(fy),ax=fx-ix,ay=fy-iy;
 return (G[iy*GW+ix]*(1-ax)+G[iy*GW+ix+1]*ax)*(1-ay)+(G[(iy+1)*GW+ix]*(1-ax)+G[(iy+1)*GW+ix+1]*ax)*ay;}
for(var y=0;y<H;y++){for(var x=0;x<W;x++){
  var m=M0+M1*(y/H);
  if(x<536){ if(y<10) m+=4.6; else if(y<28) m+=4.6*(28-y)/18; }
  else { if(y<30) m-=0.8; }
  if(x<6 && y<320) m+=2.0*(1-y/320);
  if(x==380 && y>10 && y<430) m+=3.5;
  var k=Math.round(x/P), du=Math.abs(x-k*P);
  if(k>=1&&k<=15&&du<1.7){
    if(y<20) m=-6; else if(y<40) m-=6*(40-y)/20;
    else if(y>300 && y<552) m+=(x<300?1.8:1.0);
    else if(y>=552) m-=3;
  }
  var vc=(x<300)?561:(561-2*(x-300)/230);
  var onArc=false;
  if(x<48 && y>495){ if(dseg(x,y,44,557,17,534)<2.6||dseg(x,y,17,534,2,501)<2.6) onArc=true; }
  else if(x>543 && y>500){ if(dseg(x,y,547,554,557,541)<2.6||dseg(x,y,557,541,564,524)<2.6||dseg(x,y,564,524,566,507)<2.6) onArc=true; }
  var cl=Math.sqrt(x*x+(570-y)*(570-y)), cr=Math.sqrt((570-x)*(570-x)+(570-y)*(570-y));
  if(onArc) m+=2.8;
  else if(cl<28||cr<22) m-=2.2;
  else if(y>500 && x>=44 && x<=547){
     var dv=y-vc; if(Math.abs(dv)<6) m+=3.8; else if(dv>=6) m+=1.0;
  }
  if(x>=567) m-=4;
  var v=m+SIG*gauss()+(0.3+0.9*y/H)*lf(x,y)*1.3;
  if(rnd()<PO) v+=(rnd()<0.5?-1:1)*(OA+3*rnd());
  var t=(v-VMIN)/(VMAX-VMIN);
  var r=Math.min(1,Math.max(0.0416,0.0416+0.9584*t/0.365079)),g=Math.min(1,Math.max(0,(t-0.365079)/0.380953)),b=Math.min(1,Math.max(0,(t-0.746032)/0.253968));
  var i=(y*W+x)*4;D[i]=r*255;D[i+1]=g*255;D[i+2]=b*255;D[i+3]=255;
}}
ctx.putImageData(im,0,0);
})();

</script>
</body></html>
